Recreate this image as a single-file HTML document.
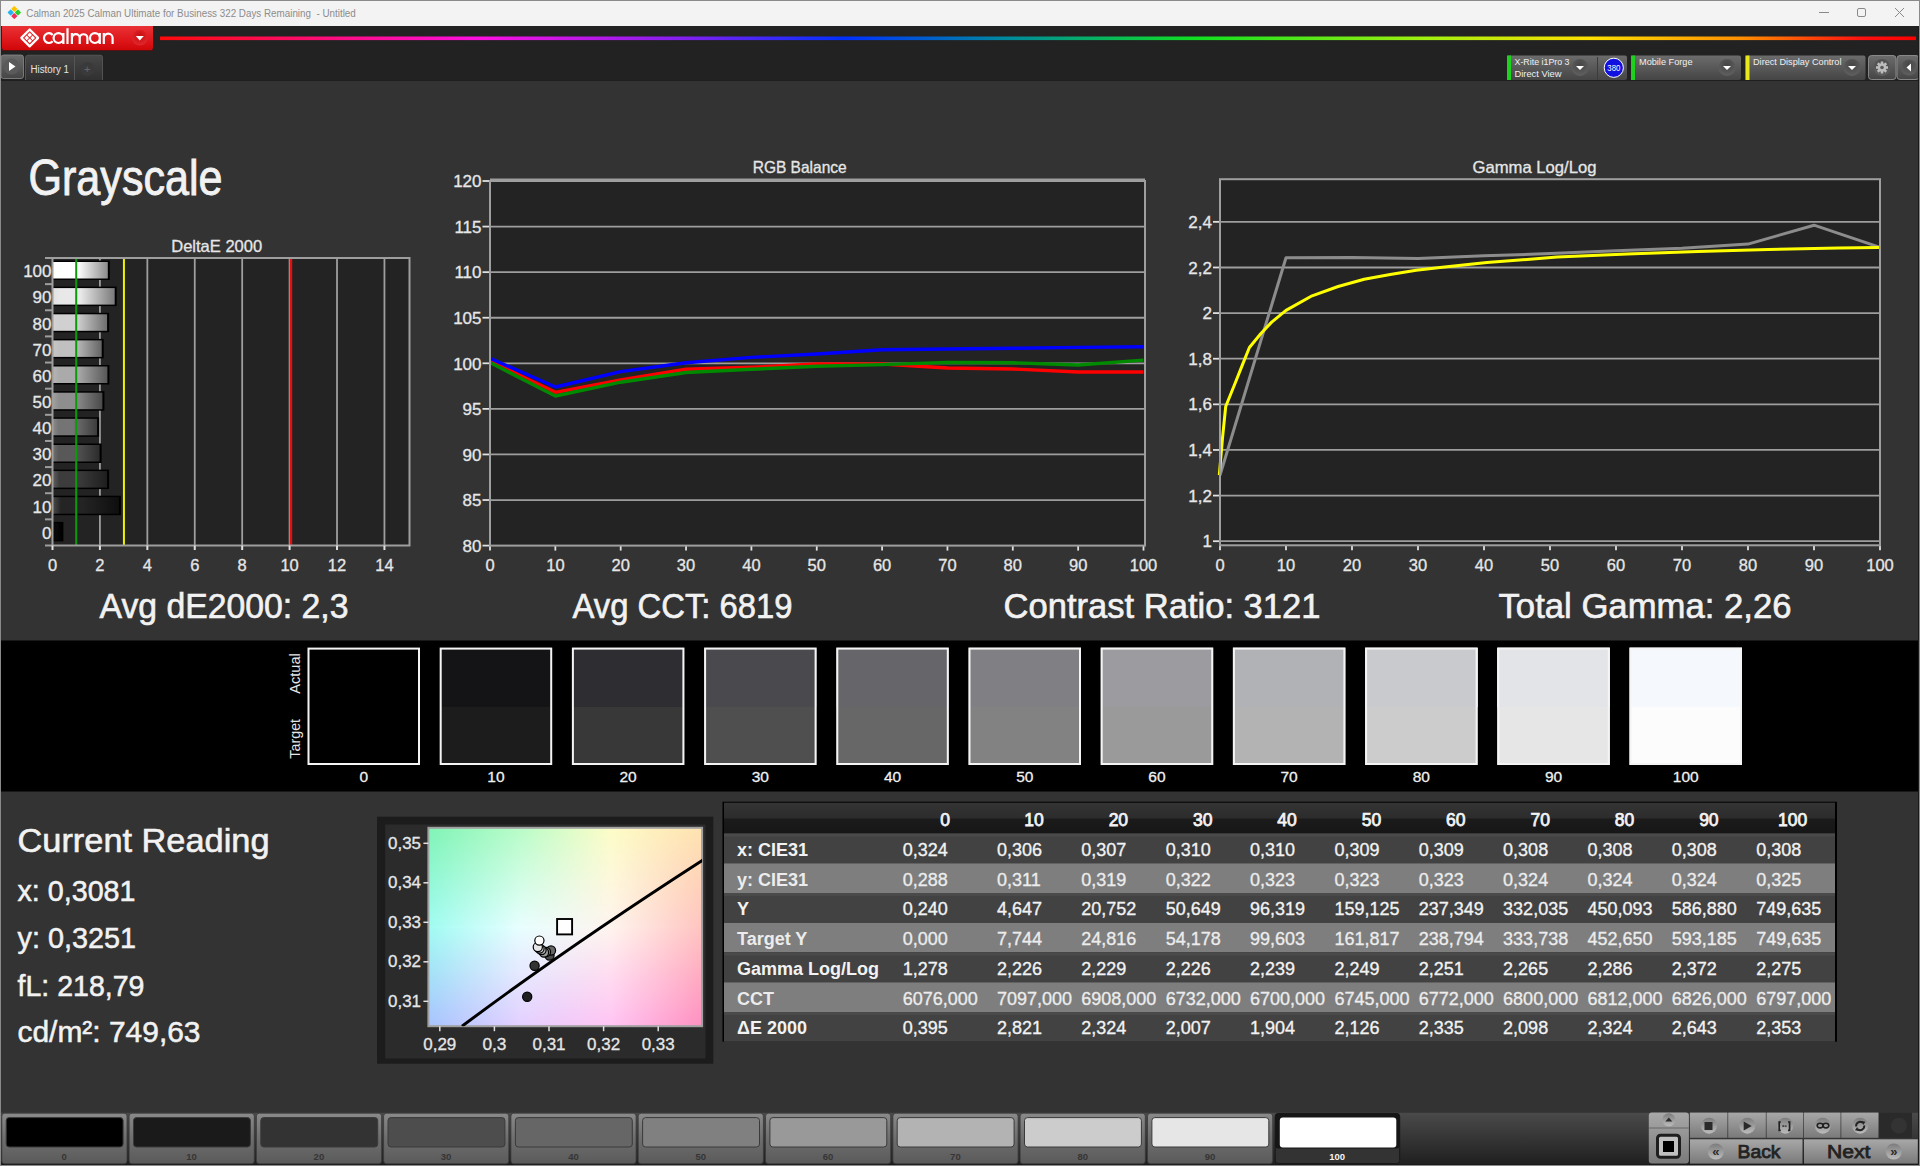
<!DOCTYPE html>
<html><head><meta charset="utf-8"><title>Calman Grayscale</title>
<style>html,body{margin:0;padding:0;background:#333;overflow:hidden}svg{display:block}text{font-family:"Liberation Sans", sans-serif}</style>
</head><body>
<svg width="1920" height="1166" viewBox="0 0 1920 1166" font-family='"Liberation Sans", sans-serif'>
<defs>
<linearGradient id="rainbow" x1="160" y1="0" x2="1916" y2="0" gradientUnits="userSpaceOnUse"><stop offset="0" stop-color="#ff0a0a"/><stop offset="0.18" stop-color="#ff10e0"/><stop offset="0.30" stop-color="#8020f0"/><stop offset="0.39" stop-color="#0030ff"/><stop offset="0.48" stop-color="#0088a0"/><stop offset="0.59" stop-color="#10e020"/><stop offset="0.72" stop-color="#a0f010"/><stop offset="0.815" stop-color="#ffe000"/><stop offset="0.90" stop-color="#ff9000"/><stop offset="0.97" stop-color="#ff1010"/><stop offset="1" stop-color="#ff0000"/></linearGradient>
<linearGradient id="redbtn" x1="0" y1="0" x2="0" y2="1"><stop offset="0" stop-color="#e83236"/><stop offset="0.5" stop-color="#e01a1e"/><stop offset="1" stop-color="#d00608"/></linearGradient>
<linearGradient id="greybtn" x1="0" y1="0" x2="0" y2="1"><stop offset="0" stop-color="#6c6c6c"/><stop offset="1" stop-color="#454545"/></linearGradient>
<linearGradient id="tabg" x1="0" y1="0" x2="0" y2="1"><stop offset="0" stop-color="#474747"/><stop offset="1" stop-color="#303030"/></linearGradient>
<radialGradient id="ddcirc" cx="0.5" cy="0.35" r="0.6"><stop offset="0" stop-color="#454545"/><stop offset="1" stop-color="#5e5e5e"/></radialGradient>
<linearGradient id="hdr" x1="0" y1="0" x2="0" y2="1"><stop offset="0" stop-color="#343434"/><stop offset="0.5" stop-color="#2c2c2c"/><stop offset="0.52" stop-color="#1b1b1b"/><stop offset="1" stop-color="#161616"/></linearGradient>
<linearGradient id="strip" x1="0" y1="0" x2="0" y2="1"><stop offset="0" stop-color="#3a3a3a"/><stop offset="1" stop-color="#262626"/></linearGradient>
<linearGradient id="sbtn" x1="0" y1="0" x2="0" y2="1"><stop offset="0" stop-color="#8a8a8a"/><stop offset="0.5" stop-color="#6e6e6e"/><stop offset="1" stop-color="#5a5a5a"/></linearGradient>
<linearGradient id="ctlbtn" x1="0" y1="0" x2="0" y2="1"><stop offset="0" stop-color="#a8a8a8"/><stop offset="1" stop-color="#7a7a7a"/></linearGradient>
<linearGradient id="ctlcirc" x1="0" y1="0" x2="0" y2="1"><stop offset="0" stop-color="#7c7c7c"/><stop offset="1" stop-color="#bcbcbc"/></linearGradient>
</defs>
<rect x="0" y="0" width="1920" height="1166" fill="#333333" />
<rect x="0" y="0" width="1920" height="26" fill="#f3f3f3" />
<line x1="0" y1="0.5" x2="1920" y2="0.5" stroke="#8a8a8a" stroke-width="1" />
<line x1="0.5" y1="0" x2="0.5" y2="1166" stroke="#8a8a8a" stroke-width="1" />
<g transform="translate(14.3,12.5) rotate(45)"><rect x="-4.8" y="-4.8" width="4.5" height="4.5" rx="0.6" fill="#ffc400"/><rect x="0.3" y="-4.8" width="4.5" height="4.5" rx="0.6" fill="#2ad12a"/><rect x="0.3" y="0.3" width="4.5" height="4.5" rx="0.6" fill="#f0305a"/><rect x="-4.8" y="0.3" width="4.5" height="4.5" rx="0.6" fill="#26b4f0"/></g>
<text x="26.3" y="17.0" font-size="11.5" fill="#8c8c8c" textLength="329.5" lengthAdjust="spacingAndGlyphs" xml:space="preserve">Calman 2025 Calman Ultimate for Business 322 Days Remaining  - Untitled</text>
<line x1="1819" y1="12.5" x2="1829" y2="12.5" stroke="#8a8a8a" stroke-width="1" />
<rect x="1857.5" y="8.5" width="8" height="8" rx="1.5" fill="none" stroke="#8a8a8a" stroke-width="1"/>
<line x1="1895" y1="8" x2="1904" y2="17" stroke="#8a8a8a" stroke-width="1" />
<line x1="1904" y1="8" x2="1895" y2="17" stroke="#8a8a8a" stroke-width="1" />
<rect x="1" y="26" width="1919" height="54" fill="#222222" />
<path d="M2,26 H153 V47 Q153,50.5 149.5,50.5 H5.5 Q2,50.5 2,47 Z" fill="url(#redbtn)"/>
<path d="M2,50.5 H153" stroke="#5a1010" stroke-width="1"/>
<g transform="translate(29.7,37.9) rotate(45)"><rect x="-5.95" y="-5.95" width="11.9" height="11.9" rx="0.3" fill="none" stroke="#ffffff" stroke-width="2.3"/><rect x="-3.75" y="-3.75" width="3.3" height="3.3" fill="#fff"/><rect x="0.45" y="-3.75" width="3.3" height="3.3" fill="#fff"/><rect x="-3.75" y="0.45" width="3.3" height="3.3" fill="#fff"/><rect x="0.45" y="0.45" width="3.3" height="3.3" fill="#fff"/></g>
<path d="M52.65,34.95 A4.9,4.9 0 1 0 52.65,41.25 M63.4,38.1 A4.9,4.9 0 1 0 53.6,38.1 A4.9,4.9 0 1 0 63.4,38.1 M63.4,33.1 V44.0 M67.5,28.2 V44.0 M71.9,32.9 V44.0 M71.9,38.1 A3.9,3.9 0 0 1 79.7,38.1 V44.0 M79.7,38.1 A3.85,3.85 0 0 1 87.4,38.1 V44.0 M99.80000000000001,38.1 A4.9,4.9 0 1 0 90.0,38.1 A4.9,4.9 0 1 0 99.80000000000001,38.1 M99.8,33.1 V44.0 M103.8,32.9 V44.0 M103.8,38.1 A4.4,4.4 0 0 1 112.6,38.1 V44.0" fill="none" stroke="#ffffff" stroke-width="2.2"/>
<defs><radialGradient id="reddd" cx="0.5" cy="0.4" r="0.6"><stop offset="0" stop-color="#c80c10"/><stop offset="1" stop-color="#e0282c"/></radialGradient></defs>
<circle cx="139.8" cy="37.7" r="7.8" fill="url(#reddd)"/>
<path d="M135.8,36 H143.8 L139.8,40.5 Z" fill="#ffffff"/>
<rect x="160" y="36.5" width="1756" height="3.6" fill="url(#rainbow)" />
<rect x="1" y="55" width="22.5" height="23.5" rx="2.5" fill="url(#greybtn)" stroke="#8a8a8a" stroke-width="0.8"/>
<circle cx="11.5" cy="66.5" r="8" fill="#5a5a5a"/>
<path d="M9,62 L15.5,66.5 L9,71 Z" fill="#ffffff"/>
<path d="M25.5,80 V58 Q25.5,55.2 28.5,55.2 H101 Q102.5,55.2 102.5,58 V80" fill="url(#tabg)" stroke="#5c5c5c" stroke-width="0.8"/>
<line x1="74.5" y1="56" x2="74.5" y2="80" stroke="#555" stroke-width="1" />
<text x="30.5" y="72.5" font-size="10" fill="#e4e4e4" textLength="38.5" lengthAdjust="spacingAndGlyphs">History 1</text>
<circle cx="87.3" cy="69" r="7" fill="#3a3a3a"/>
<text x="87.3" y="73.0" font-size="11" fill="#666" text-anchor="middle">+</text>
<rect x="1507" y="55.5" width="120" height="24.5" rx="2" fill="url(#greybtn)"/>
<rect x="1507" y="55.5" width="4" height="24.5" fill="#1fd11f" />
<text x="1514.5" y="65.0" font-size="9.5" fill="#f0f0f0" textLength="55.0" lengthAdjust="spacingAndGlyphs">X-Rite i1Pro 3</text>
<text x="1514.5" y="76.5" font-size="9.5" fill="#f0f0f0" textLength="47.0" lengthAdjust="spacingAndGlyphs">Direct View</text>
<circle cx="1580" cy="67.5" r="8.5" fill="url(#ddcirc)"/>
<path d="M1576,66 H1584 L1580,70 Z" fill="#ffffff"/>
<line x1="1597.5" y1="57" x2="1597.5" y2="80" stroke="#3c3c3c" stroke-width="1" />
<circle cx="1613.8" cy="67.8" r="9.6" fill="#1010e0" stroke="#ffffff" stroke-width="1"/>
<text x="1613.8" y="71.0" font-size="8.5" fill="#ffffff" text-anchor="middle" textLength="13.0" lengthAdjust="spacingAndGlyphs">380</text>
<rect x="1631" y="55.5" width="110" height="24.5" rx="2" fill="url(#greybtn)"/>
<rect x="1631" y="55.5" width="4" height="24.5" fill="#1fd11f" />
<text x="1639.0" y="65.0" font-size="9.5" fill="#f0f0f0" textLength="53.5" lengthAdjust="spacingAndGlyphs">Mobile Forge</text>
<circle cx="1727" cy="67.5" r="8.5" fill="url(#ddcirc)"/>
<path d="M1723,66 H1731 L1727,70 Z" fill="#ffffff"/>
<rect x="1745.5" y="55.5" width="120.0" height="24.5" rx="2" fill="url(#greybtn)"/>
<rect x="1745.5" y="55.5" width="4" height="24.5" fill="#e8e81a" />
<text x="1753.0" y="65.0" font-size="9.5" fill="#f0f0f0" textLength="88.5" lengthAdjust="spacingAndGlyphs">Direct Display Control</text>
<circle cx="1852" cy="67.5" r="8.5" fill="url(#ddcirc)"/>
<path d="M1848,66 H1856 L1852,70 Z" fill="#ffffff"/>
<rect x="1868.5" y="55.5" width="27.5" height="24" rx="3" fill="url(#greybtn)" stroke="#9a9a9a" stroke-width="0.8"/>
<circle cx="1882" cy="67.5" r="8.5" fill="url(#ddcirc)"/>
<g transform="translate(1882,67.5)" fill="#bdbdbd"><circle r="4.2"/><rect x="-1.3" y="-6" width="2.6" height="3" transform="rotate(0)"/><rect x="-1.3" y="-6" width="2.6" height="3" transform="rotate(45)"/><rect x="-1.3" y="-6" width="2.6" height="3" transform="rotate(90)"/><rect x="-1.3" y="-6" width="2.6" height="3" transform="rotate(135)"/><rect x="-1.3" y="-6" width="2.6" height="3" transform="rotate(180)"/><rect x="-1.3" y="-6" width="2.6" height="3" transform="rotate(225)"/><rect x="-1.3" y="-6" width="2.6" height="3" transform="rotate(270)"/><rect x="-1.3" y="-6" width="2.6" height="3" transform="rotate(315)"/><circle r="1.8" fill="#5a5a5a"/></g>
<rect x="1897" y="55.5" width="22" height="24" rx="3" fill="url(#greybtn)" stroke="#9a9a9a" stroke-width="0.8"/>
<circle cx="1909" cy="67.5" r="8" fill="url(#ddcirc)"/>
<path d="M1911,63.5 V71.5 L1906.5,67.5 Z" fill="#ffffff"/>
<rect x="1" y="80" width="1918" height="560" fill="#333333" />
<rect x="1" y="80" width="1918" height="1" fill="#1e1e1e" />
<rect x="1918" y="26" width="1" height="1140" fill="#1a1a1a" />
<rect x="1919" y="0" width="1" height="1166" fill="#8a8a8a" />
<text x="28.5" y="195.3" font-size="50" fill="#f2f2f2" stroke="#f2f2f2" stroke-width="0.90" textLength="194.0" lengthAdjust="spacingAndGlyphs">Grayscale</text>
<rect x="52.5" y="258.0" width="357.0" height="287.5" fill="#232323" />
<line x1="99.92" y1="258.0" x2="99.92" y2="545.5" stroke="#9e9e9e" stroke-width="1.8" />
<line x1="147.34" y1="258.0" x2="147.34" y2="545.5" stroke="#9e9e9e" stroke-width="1.8" />
<line x1="194.76" y1="258.0" x2="194.76" y2="545.5" stroke="#9e9e9e" stroke-width="1.8" />
<line x1="242.18" y1="258.0" x2="242.18" y2="545.5" stroke="#9e9e9e" stroke-width="1.8" />
<line x1="289.6" y1="258.0" x2="289.6" y2="545.5" stroke="#9e9e9e" stroke-width="1.8" />
<line x1="337.02" y1="258.0" x2="337.02" y2="545.5" stroke="#9e9e9e" stroke-width="1.8" />
<line x1="384.44" y1="258.0" x2="384.44" y2="545.5" stroke="#9e9e9e" stroke-width="1.8" />
<defs><linearGradient id="bar0" x1="0" y1="0" x2="1" y2="0"><stop offset="0" stop-color="#ffffff"/><stop offset="0.12" stop-color="#ffffff"/><stop offset="0.45" stop-color="#ffffff"/><stop offset="1" stop-color="#8c8c8c"/></linearGradient><linearGradient id="bar1" x1="0" y1="0" x2="1" y2="0"><stop offset="0" stop-color="#e2e2e2"/><stop offset="0.12" stop-color="#e8e8e8"/><stop offset="0.45" stop-color="#e8e8e8"/><stop offset="1" stop-color="#7a7a7a"/></linearGradient><linearGradient id="bar2" x1="0" y1="0" x2="1" y2="0"><stop offset="0" stop-color="#d4d4d4"/><stop offset="0.12" stop-color="#d0d0d0"/><stop offset="0.45" stop-color="#d0d0d0"/><stop offset="1" stop-color="#6e6e6e"/></linearGradient><linearGradient id="bar3" x1="0" y1="0" x2="1" y2="0"><stop offset="0" stop-color="#c6c6c6"/><stop offset="0.12" stop-color="#c0c0c0"/><stop offset="0.45" stop-color="#c0c0c0"/><stop offset="1" stop-color="#646464"/></linearGradient><linearGradient id="bar4" x1="0" y1="0" x2="1" y2="0"><stop offset="0" stop-color="#b4b4b4"/><stop offset="0.12" stop-color="#aaaaaa"/><stop offset="0.45" stop-color="#aaaaaa"/><stop offset="1" stop-color="#585858"/></linearGradient><linearGradient id="bar5" x1="0" y1="0" x2="1" y2="0"><stop offset="0" stop-color="#a0a0a0"/><stop offset="0.12" stop-color="#8e8e8e"/><stop offset="0.45" stop-color="#8e8e8e"/><stop offset="1" stop-color="#4a4a4a"/></linearGradient><linearGradient id="bar6" x1="0" y1="0" x2="1" y2="0"><stop offset="0" stop-color="#8a8a8a"/><stop offset="0.12" stop-color="#747474"/><stop offset="0.45" stop-color="#747474"/><stop offset="1" stop-color="#3c3c3c"/></linearGradient><linearGradient id="bar7" x1="0" y1="0" x2="1" y2="0"><stop offset="0" stop-color="#707070"/><stop offset="0.12" stop-color="#585858"/><stop offset="0.45" stop-color="#585858"/><stop offset="1" stop-color="#2c2c2c"/></linearGradient><linearGradient id="bar8" x1="0" y1="0" x2="1" y2="0"><stop offset="0" stop-color="#5e5e5e"/><stop offset="0.12" stop-color="#3c3c3c"/><stop offset="0.45" stop-color="#3c3c3c"/><stop offset="1" stop-color="#1e1e1e"/></linearGradient><linearGradient id="bar9" x1="0" y1="0" x2="1" y2="0"><stop offset="0" stop-color="#4a4a4a"/><stop offset="0.12" stop-color="#242424"/><stop offset="0.45" stop-color="#242424"/><stop offset="1" stop-color="#0e0e0e"/></linearGradient><linearGradient id="bar10" x1="0" y1="0" x2="1" y2="0"><stop offset="0" stop-color="#000000"/><stop offset="0.12" stop-color="#080808"/><stop offset="0.45" stop-color="#080808"/><stop offset="1" stop-color="#000000"/></linearGradient></defs>
<rect x="53.0" y="260.5" width="56.8" height="19.5" fill="#000"/>
<rect x="53.0" y="262.0" width="54.8" height="16.5" fill="url(#bar0)"/>
<rect x="53.0" y="286.6" width="63.7" height="19.5" fill="#000"/>
<rect x="53.0" y="288.1" width="61.7" height="16.5" fill="url(#bar1)"/>
<rect x="53.0" y="312.8" width="56.1" height="19.5" fill="#000"/>
<rect x="53.0" y="314.3" width="54.1" height="16.5" fill="url(#bar2)"/>
<rect x="53.0" y="338.9" width="50.7" height="19.5" fill="#000"/>
<rect x="53.0" y="340.4" width="48.7" height="16.5" fill="url(#bar3)"/>
<rect x="53.0" y="365.0" width="56.4" height="19.5" fill="#000"/>
<rect x="53.0" y="366.5" width="54.4" height="16.5" fill="url(#bar4)"/>
<rect x="53.0" y="391.2" width="51.4" height="19.5" fill="#000"/>
<rect x="53.0" y="392.7" width="49.4" height="16.5" fill="url(#bar5)"/>
<rect x="53.0" y="417.3" width="46.1" height="19.5" fill="#000"/>
<rect x="53.0" y="418.8" width="44.1" height="16.5" fill="url(#bar6)"/>
<rect x="53.0" y="443.5" width="48.6" height="19.5" fill="#000"/>
<rect x="53.0" y="445.0" width="46.6" height="16.5" fill="url(#bar7)"/>
<rect x="53.0" y="469.6" width="56.1" height="19.5" fill="#000"/>
<rect x="53.0" y="471.1" width="54.1" height="16.5" fill="url(#bar8)"/>
<rect x="53.0" y="495.7" width="67.9" height="19.5" fill="#000"/>
<rect x="53.0" y="497.2" width="65.9" height="16.5" fill="url(#bar9)"/>
<rect x="53.0" y="521.9" width="10.4" height="19.5" fill="#000"/>
<rect x="53.0" y="523.4" width="8.4" height="16.5" fill="url(#bar10)"/>
<line x1="76.21000000000001" y1="258.0" x2="76.21000000000001" y2="545.5" stroke="#0a9a0a" stroke-width="2" />
<line x1="123.92999999999999" y1="258.0" x2="123.92999999999999" y2="545.5" stroke="#f2f200" stroke-width="2" />
<line x1="291" y1="258.0" x2="291" y2="545.5" stroke="#e01010" stroke-width="2.4" />
<rect x="52.5" y="258.0" width="357.0" height="287.5" fill="none" stroke="#9e9e9e" stroke-width="2"/>
<line x1="45" y1="258.0" x2="52.5" y2="258.0" stroke="#9e9e9e" stroke-width="2" />
<line x1="45" y1="284.1363636363636" x2="52.5" y2="284.1363636363636" stroke="#9e9e9e" stroke-width="2" />
<line x1="45" y1="310.27272727272725" x2="52.5" y2="310.27272727272725" stroke="#9e9e9e" stroke-width="2" />
<line x1="45" y1="336.4090909090909" x2="52.5" y2="336.4090909090909" stroke="#9e9e9e" stroke-width="2" />
<line x1="45" y1="362.54545454545456" x2="52.5" y2="362.54545454545456" stroke="#9e9e9e" stroke-width="2" />
<line x1="45" y1="388.6818181818182" x2="52.5" y2="388.6818181818182" stroke="#9e9e9e" stroke-width="2" />
<line x1="45" y1="414.8181818181818" x2="52.5" y2="414.8181818181818" stroke="#9e9e9e" stroke-width="2" />
<line x1="45" y1="440.9545454545455" x2="52.5" y2="440.9545454545455" stroke="#9e9e9e" stroke-width="2" />
<line x1="45" y1="467.0909090909091" x2="52.5" y2="467.0909090909091" stroke="#9e9e9e" stroke-width="2" />
<line x1="45" y1="493.22727272727275" x2="52.5" y2="493.22727272727275" stroke="#9e9e9e" stroke-width="2" />
<line x1="45" y1="519.3636363636364" x2="52.5" y2="519.3636363636364" stroke="#9e9e9e" stroke-width="2" />
<line x1="45" y1="545.5" x2="52.5" y2="545.5" stroke="#9e9e9e" stroke-width="2" />
<line x1="52.5" y1="545.5" x2="52.5" y2="550.0" stroke="#e0e0e0" stroke-width="2" />
<line x1="99.92" y1="545.5" x2="99.92" y2="550.0" stroke="#e0e0e0" stroke-width="2" />
<line x1="147.34" y1="545.5" x2="147.34" y2="550.0" stroke="#e0e0e0" stroke-width="2" />
<line x1="194.76" y1="545.5" x2="194.76" y2="550.0" stroke="#e0e0e0" stroke-width="2" />
<line x1="242.18" y1="545.5" x2="242.18" y2="550.0" stroke="#e0e0e0" stroke-width="2" />
<line x1="289.6" y1="545.5" x2="289.6" y2="550.0" stroke="#e0e0e0" stroke-width="2" />
<line x1="337.02" y1="545.5" x2="337.02" y2="550.0" stroke="#e0e0e0" stroke-width="2" />
<line x1="384.44" y1="545.5" x2="384.44" y2="550.0" stroke="#e0e0e0" stroke-width="2" />
<text x="51.5" y="277.3" font-size="17" fill="#e6e6e6" stroke="#e6e6e6" stroke-width="0.31" text-anchor="end">100</text>
<text x="51.5" y="303.4" font-size="17" fill="#e6e6e6" stroke="#e6e6e6" stroke-width="0.31" text-anchor="end">90</text>
<text x="51.5" y="329.5" font-size="17" fill="#e6e6e6" stroke="#e6e6e6" stroke-width="0.31" text-anchor="end">80</text>
<text x="51.5" y="355.7" font-size="17" fill="#e6e6e6" stroke="#e6e6e6" stroke-width="0.31" text-anchor="end">70</text>
<text x="51.5" y="381.8" font-size="17" fill="#e6e6e6" stroke="#e6e6e6" stroke-width="0.31" text-anchor="end">60</text>
<text x="51.5" y="407.9" font-size="17" fill="#e6e6e6" stroke="#e6e6e6" stroke-width="0.31" text-anchor="end">50</text>
<text x="51.5" y="434.1" font-size="17" fill="#e6e6e6" stroke="#e6e6e6" stroke-width="0.31" text-anchor="end">40</text>
<text x="51.5" y="460.2" font-size="17" fill="#e6e6e6" stroke="#e6e6e6" stroke-width="0.31" text-anchor="end">30</text>
<text x="51.5" y="486.4" font-size="17" fill="#e6e6e6" stroke="#e6e6e6" stroke-width="0.31" text-anchor="end">20</text>
<text x="51.5" y="512.5" font-size="17" fill="#e6e6e6" stroke="#e6e6e6" stroke-width="0.31" text-anchor="end">10</text>
<text x="51.5" y="538.6" font-size="17" fill="#e6e6e6" stroke="#e6e6e6" stroke-width="0.31" text-anchor="end">0</text>
<text x="52.5" y="570.5" font-size="16.5" fill="#e6e6e6" stroke="#e6e6e6" stroke-width="0.30" text-anchor="middle">0</text>
<text x="99.9" y="570.5" font-size="16.5" fill="#e6e6e6" stroke="#e6e6e6" stroke-width="0.30" text-anchor="middle">2</text>
<text x="147.3" y="570.5" font-size="16.5" fill="#e6e6e6" stroke="#e6e6e6" stroke-width="0.30" text-anchor="middle">4</text>
<text x="194.8" y="570.5" font-size="16.5" fill="#e6e6e6" stroke="#e6e6e6" stroke-width="0.30" text-anchor="middle">6</text>
<text x="242.2" y="570.5" font-size="16.5" fill="#e6e6e6" stroke="#e6e6e6" stroke-width="0.30" text-anchor="middle">8</text>
<text x="289.6" y="570.5" font-size="16.5" fill="#e6e6e6" stroke="#e6e6e6" stroke-width="0.30" text-anchor="middle">10</text>
<text x="337.0" y="570.5" font-size="16.5" fill="#e6e6e6" stroke="#e6e6e6" stroke-width="0.30" text-anchor="middle">12</text>
<text x="384.4" y="570.5" font-size="16.5" fill="#e6e6e6" stroke="#e6e6e6" stroke-width="0.30" text-anchor="middle">14</text>
<text x="216.7" y="252.1" font-size="16.5" fill="#e6e6e6" stroke="#e6e6e6" stroke-width="0.30" text-anchor="middle" textLength="91.0" lengthAdjust="spacingAndGlyphs">DeltaE 2000</text>
<rect x="490.0" y="181.0" width="655.0" height="364.6" fill="#232323" />
<line x1="490.0" y1="226.575" x2="1145.0" y2="226.575" stroke="#9e9e9e" stroke-width="1.8" />
<line x1="490.0" y1="272.15" x2="1145.0" y2="272.15" stroke="#9e9e9e" stroke-width="1.8" />
<line x1="490.0" y1="317.725" x2="1145.0" y2="317.725" stroke="#9e9e9e" stroke-width="1.8" />
<line x1="490.0" y1="363.3" x2="1145.0" y2="363.3" stroke="#9e9e9e" stroke-width="1.8" />
<line x1="490.0" y1="408.875" x2="1145.0" y2="408.875" stroke="#9e9e9e" stroke-width="1.8" />
<line x1="490.0" y1="454.45000000000005" x2="1145.0" y2="454.45000000000005" stroke="#9e9e9e" stroke-width="1.8" />
<line x1="490.0" y1="500.02500000000003" x2="1145.0" y2="500.02500000000003" stroke="#9e9e9e" stroke-width="1.8" />
<line x1="482.5" y1="181.0" x2="490.0" y2="181.0" stroke="#e0e0e0" stroke-width="1.8" />
<text x="481.5" y="187.2" font-size="17" fill="#e6e6e6" stroke="#e6e6e6" stroke-width="0.31" text-anchor="end">120</text>
<line x1="482.5" y1="226.575" x2="490.0" y2="226.575" stroke="#e0e0e0" stroke-width="1.8" />
<text x="481.5" y="232.8" font-size="17" fill="#e6e6e6" stroke="#e6e6e6" stroke-width="0.31" text-anchor="end">115</text>
<line x1="482.5" y1="272.15" x2="490.0" y2="272.15" stroke="#e0e0e0" stroke-width="1.8" />
<text x="481.5" y="278.3" font-size="17" fill="#e6e6e6" stroke="#e6e6e6" stroke-width="0.31" text-anchor="end">110</text>
<line x1="482.5" y1="317.725" x2="490.0" y2="317.725" stroke="#e0e0e0" stroke-width="1.8" />
<text x="481.5" y="323.9" font-size="17" fill="#e6e6e6" stroke="#e6e6e6" stroke-width="0.31" text-anchor="end">105</text>
<line x1="482.5" y1="363.3" x2="490.0" y2="363.3" stroke="#e0e0e0" stroke-width="1.8" />
<text x="481.5" y="369.5" font-size="17" fill="#e6e6e6" stroke="#e6e6e6" stroke-width="0.31" text-anchor="end">100</text>
<line x1="482.5" y1="408.875" x2="490.0" y2="408.875" stroke="#e0e0e0" stroke-width="1.8" />
<text x="481.5" y="415.1" font-size="17" fill="#e6e6e6" stroke="#e6e6e6" stroke-width="0.31" text-anchor="end">95</text>
<line x1="482.5" y1="454.45000000000005" x2="490.0" y2="454.45000000000005" stroke="#e0e0e0" stroke-width="1.8" />
<text x="481.5" y="460.7" font-size="17" fill="#e6e6e6" stroke="#e6e6e6" stroke-width="0.31" text-anchor="end">90</text>
<line x1="482.5" y1="500.02500000000003" x2="490.0" y2="500.02500000000003" stroke="#e0e0e0" stroke-width="1.8" />
<text x="481.5" y="506.2" font-size="17" fill="#e6e6e6" stroke="#e6e6e6" stroke-width="0.31" text-anchor="end">85</text>
<line x1="482.5" y1="545.6" x2="490.0" y2="545.6" stroke="#e0e0e0" stroke-width="1.8" />
<text x="481.5" y="551.8" font-size="17" fill="#e6e6e6" stroke="#e6e6e6" stroke-width="0.31" text-anchor="end">80</text>
<line x1="490.0" y1="545.6" x2="490.0" y2="550.6" stroke="#e0e0e0" stroke-width="1.8" />
<text x="490.0" y="570.5" font-size="16.5" fill="#e6e6e6" stroke="#e6e6e6" stroke-width="0.30" text-anchor="middle">0</text>
<line x1="555.35" y1="545.6" x2="555.35" y2="550.6" stroke="#e0e0e0" stroke-width="1.8" />
<text x="555.4" y="570.5" font-size="16.5" fill="#e6e6e6" stroke="#e6e6e6" stroke-width="0.30" text-anchor="middle">10</text>
<line x1="620.7" y1="545.6" x2="620.7" y2="550.6" stroke="#e0e0e0" stroke-width="1.8" />
<text x="620.7" y="570.5" font-size="16.5" fill="#e6e6e6" stroke="#e6e6e6" stroke-width="0.30" text-anchor="middle">20</text>
<line x1="686.05" y1="545.6" x2="686.05" y2="550.6" stroke="#e0e0e0" stroke-width="1.8" />
<text x="686.0" y="570.5" font-size="16.5" fill="#e6e6e6" stroke="#e6e6e6" stroke-width="0.30" text-anchor="middle">30</text>
<line x1="751.4" y1="545.6" x2="751.4" y2="550.6" stroke="#e0e0e0" stroke-width="1.8" />
<text x="751.4" y="570.5" font-size="16.5" fill="#e6e6e6" stroke="#e6e6e6" stroke-width="0.30" text-anchor="middle">40</text>
<line x1="816.75" y1="545.6" x2="816.75" y2="550.6" stroke="#e0e0e0" stroke-width="1.8" />
<text x="816.8" y="570.5" font-size="16.5" fill="#e6e6e6" stroke="#e6e6e6" stroke-width="0.30" text-anchor="middle">50</text>
<line x1="882.1" y1="545.6" x2="882.1" y2="550.6" stroke="#e0e0e0" stroke-width="1.8" />
<text x="882.1" y="570.5" font-size="16.5" fill="#e6e6e6" stroke="#e6e6e6" stroke-width="0.30" text-anchor="middle">60</text>
<line x1="947.45" y1="545.6" x2="947.45" y2="550.6" stroke="#e0e0e0" stroke-width="1.8" />
<text x="947.5" y="570.5" font-size="16.5" fill="#e6e6e6" stroke="#e6e6e6" stroke-width="0.30" text-anchor="middle">70</text>
<line x1="1012.8" y1="545.6" x2="1012.8" y2="550.6" stroke="#e0e0e0" stroke-width="1.8" />
<text x="1012.8" y="570.5" font-size="16.5" fill="#e6e6e6" stroke="#e6e6e6" stroke-width="0.30" text-anchor="middle">80</text>
<line x1="1078.15" y1="545.6" x2="1078.15" y2="550.6" stroke="#e0e0e0" stroke-width="1.8" />
<text x="1078.2" y="570.5" font-size="16.5" fill="#e6e6e6" stroke="#e6e6e6" stroke-width="0.30" text-anchor="middle">90</text>
<line x1="1143.5" y1="545.6" x2="1143.5" y2="550.6" stroke="#e0e0e0" stroke-width="1.8" />
<text x="1143.5" y="570.5" font-size="16.5" fill="#e6e6e6" stroke="#e6e6e6" stroke-width="0.30" text-anchor="middle">100</text>
<text x="799.7" y="173.1" font-size="16.5" fill="#e6e6e6" stroke="#e6e6e6" stroke-width="0.30" text-anchor="middle" textLength="94.0" lengthAdjust="spacingAndGlyphs">RGB Balance</text>
<polyline points="490.0,361.0 555.4,392.3 620.7,380.0 686.0,369.3 751.4,367.2 816.8,364.0 882.1,364.0 947.5,368.0 1012.8,369.0 1078.2,372.0 1143.5,372.0" fill="none" stroke="#ff0000" stroke-width="3.4" stroke-linejoin="round"/>
<polyline points="490.0,362.5 555.4,396.0 620.7,382.2 686.0,372.5 751.4,369.3 816.8,366.3 882.1,364.6 947.5,362.4 1012.8,362.8 1078.2,365.0 1143.5,360.1" fill="none" stroke="#008a00" stroke-width="3.4" stroke-linejoin="round"/>
<polyline points="490.0,358.3 555.4,387.0 620.7,371.6 686.0,362.8 751.4,357.4 816.8,354.0 882.1,349.7 947.5,349.0 1012.8,348.3 1078.2,347.4 1143.5,346.8" fill="none" stroke="#0000ff" stroke-width="3.4" stroke-linejoin="round"/>
<rect x="490.0" y="181.0" width="655.0" height="364.6" fill="none" stroke="#9e9e9e" stroke-width="2"/>
<line x1="490.0" y1="179.5" x2="1145.0" y2="179.5" stroke="#9e9e9e" stroke-width="2" />
<rect x="1220.0" y="179.2" width="660.0" height="366.09999999999997" fill="#232323" />
<line x1="1220.0" y1="541.2" x2="1880.0" y2="541.2" stroke="#9e9e9e" stroke-width="1.8" />
<line x1="1213" y1="541.2" x2="1220.0" y2="541.2" stroke="#e0e0e0" stroke-width="1.8" />
<text x="1212.0" y="547.2" font-size="17" fill="#e6e6e6" stroke="#e6e6e6" stroke-width="0.31" text-anchor="end">1</text>
<line x1="1220.0" y1="495.58000000000004" x2="1880.0" y2="495.58000000000004" stroke="#9e9e9e" stroke-width="1.8" />
<line x1="1213" y1="495.58000000000004" x2="1220.0" y2="495.58000000000004" stroke="#e0e0e0" stroke-width="1.8" />
<text x="1212.0" y="501.6" font-size="17" fill="#e6e6e6" stroke="#e6e6e6" stroke-width="0.31" text-anchor="end">1,2</text>
<line x1="1220.0" y1="449.96000000000004" x2="1880.0" y2="449.96000000000004" stroke="#9e9e9e" stroke-width="1.8" />
<line x1="1213" y1="449.96000000000004" x2="1220.0" y2="449.96000000000004" stroke="#e0e0e0" stroke-width="1.8" />
<text x="1212.0" y="456.0" font-size="17" fill="#e6e6e6" stroke="#e6e6e6" stroke-width="0.31" text-anchor="end">1,4</text>
<line x1="1220.0" y1="404.34000000000003" x2="1880.0" y2="404.34000000000003" stroke="#9e9e9e" stroke-width="1.8" />
<line x1="1213" y1="404.34000000000003" x2="1220.0" y2="404.34000000000003" stroke="#e0e0e0" stroke-width="1.8" />
<text x="1212.0" y="410.3" font-size="17" fill="#e6e6e6" stroke="#e6e6e6" stroke-width="0.31" text-anchor="end">1,6</text>
<line x1="1220.0" y1="358.72" x2="1880.0" y2="358.72" stroke="#9e9e9e" stroke-width="1.8" />
<line x1="1213" y1="358.72" x2="1220.0" y2="358.72" stroke="#e0e0e0" stroke-width="1.8" />
<text x="1212.0" y="364.7" font-size="17" fill="#e6e6e6" stroke="#e6e6e6" stroke-width="0.31" text-anchor="end">1,8</text>
<line x1="1220.0" y1="313.1" x2="1880.0" y2="313.1" stroke="#9e9e9e" stroke-width="1.8" />
<line x1="1213" y1="313.1" x2="1220.0" y2="313.1" stroke="#e0e0e0" stroke-width="1.8" />
<text x="1212.0" y="319.1" font-size="17" fill="#e6e6e6" stroke="#e6e6e6" stroke-width="0.31" text-anchor="end">2</text>
<line x1="1220.0" y1="267.48" x2="1880.0" y2="267.48" stroke="#9e9e9e" stroke-width="1.8" />
<line x1="1213" y1="267.48" x2="1220.0" y2="267.48" stroke="#e0e0e0" stroke-width="1.8" />
<text x="1212.0" y="273.5" font-size="17" fill="#e6e6e6" stroke="#e6e6e6" stroke-width="0.31" text-anchor="end">2,2</text>
<line x1="1220.0" y1="221.85999999999996" x2="1880.0" y2="221.85999999999996" stroke="#9e9e9e" stroke-width="1.8" />
<line x1="1213" y1="221.85999999999996" x2="1220.0" y2="221.85999999999996" stroke="#e0e0e0" stroke-width="1.8" />
<text x="1212.0" y="227.9" font-size="17" fill="#e6e6e6" stroke="#e6e6e6" stroke-width="0.31" text-anchor="end">2,4</text>
<line x1="1220.0" y1="545.3" x2="1220.0" y2="550.3" stroke="#e0e0e0" stroke-width="1.8" />
<text x="1220.0" y="570.5" font-size="16.5" fill="#e6e6e6" stroke="#e6e6e6" stroke-width="0.30" text-anchor="middle">0</text>
<line x1="1286.0" y1="545.3" x2="1286.0" y2="550.3" stroke="#e0e0e0" stroke-width="1.8" />
<text x="1286.0" y="570.5" font-size="16.5" fill="#e6e6e6" stroke="#e6e6e6" stroke-width="0.30" text-anchor="middle">10</text>
<line x1="1352.0" y1="545.3" x2="1352.0" y2="550.3" stroke="#e0e0e0" stroke-width="1.8" />
<text x="1352.0" y="570.5" font-size="16.5" fill="#e6e6e6" stroke="#e6e6e6" stroke-width="0.30" text-anchor="middle">20</text>
<line x1="1418.0" y1="545.3" x2="1418.0" y2="550.3" stroke="#e0e0e0" stroke-width="1.8" />
<text x="1418.0" y="570.5" font-size="16.5" fill="#e6e6e6" stroke="#e6e6e6" stroke-width="0.30" text-anchor="middle">30</text>
<line x1="1484.0" y1="545.3" x2="1484.0" y2="550.3" stroke="#e0e0e0" stroke-width="1.8" />
<text x="1484.0" y="570.5" font-size="16.5" fill="#e6e6e6" stroke="#e6e6e6" stroke-width="0.30" text-anchor="middle">40</text>
<line x1="1550.0" y1="545.3" x2="1550.0" y2="550.3" stroke="#e0e0e0" stroke-width="1.8" />
<text x="1550.0" y="570.5" font-size="16.5" fill="#e6e6e6" stroke="#e6e6e6" stroke-width="0.30" text-anchor="middle">50</text>
<line x1="1616.0" y1="545.3" x2="1616.0" y2="550.3" stroke="#e0e0e0" stroke-width="1.8" />
<text x="1616.0" y="570.5" font-size="16.5" fill="#e6e6e6" stroke="#e6e6e6" stroke-width="0.30" text-anchor="middle">60</text>
<line x1="1682.0" y1="545.3" x2="1682.0" y2="550.3" stroke="#e0e0e0" stroke-width="1.8" />
<text x="1682.0" y="570.5" font-size="16.5" fill="#e6e6e6" stroke="#e6e6e6" stroke-width="0.30" text-anchor="middle">70</text>
<line x1="1748.0" y1="545.3" x2="1748.0" y2="550.3" stroke="#e0e0e0" stroke-width="1.8" />
<text x="1748.0" y="570.5" font-size="16.5" fill="#e6e6e6" stroke="#e6e6e6" stroke-width="0.30" text-anchor="middle">80</text>
<line x1="1814.0" y1="545.3" x2="1814.0" y2="550.3" stroke="#e0e0e0" stroke-width="1.8" />
<text x="1814.0" y="570.5" font-size="16.5" fill="#e6e6e6" stroke="#e6e6e6" stroke-width="0.30" text-anchor="middle">90</text>
<line x1="1880.0" y1="545.3" x2="1880.0" y2="550.3" stroke="#e0e0e0" stroke-width="1.8" />
<text x="1880.0" y="570.5" font-size="16.5" fill="#e6e6e6" stroke="#e6e6e6" stroke-width="0.30" text-anchor="middle">100</text>
<text x="1534.5" y="173.1" font-size="16.5" fill="#e6e6e6" stroke="#e6e6e6" stroke-width="0.30" text-anchor="middle" textLength="124.0" lengthAdjust="spacingAndGlyphs">Gamma Log/Log</text>
<polyline points="1220.0,475.2 1286.0,257.8 1352.0,257.4 1418.0,258.6 1484.0,255.8 1550.0,253.6 1616.0,250.8 1682.0,248.2 1748.0,244.1 1814.0,225.2 1880.0,247.4" fill="none" stroke="#8c8c8c" stroke-width="3" stroke-linejoin="round"/>
<polyline points="1219.3,475.2 1222.5,438.1 1225.7,406.5 1234.6,384.5 1242.8,363.9 1249.4,347.5 1260.7,333.7 1271.7,322.1 1286.0,310.4 1312.1,295.8 1338.1,286.5 1364.2,279.2 1390.2,274.5 1416.2,270.3 1442.3,267.2 1486.9,262.6 1557.2,257.0 1627.5,254.0 1697.8,251.4 1768.1,249.5 1838.4,248.1 1879.0,247.4" fill="none" stroke="#ffff00" stroke-width="3" stroke-linejoin="round"/>
<rect x="1220.0" y="179.2" width="660.0" height="366.09999999999997" fill="none" stroke="#9e9e9e" stroke-width="2"/>
<text x="99.5" y="618.2" font-size="35" fill="#f2f2f2" stroke="#f2f2f2" stroke-width="0.63" textLength="249.0" lengthAdjust="spacingAndGlyphs">Avg dE2000: 2,3</text>
<text x="572.5" y="618.2" font-size="35" fill="#f2f2f2" stroke="#f2f2f2" stroke-width="0.63" textLength="220.0" lengthAdjust="spacingAndGlyphs">Avg CCT: 6819</text>
<text x="1003.5" y="618.2" font-size="35" fill="#f2f2f2" stroke="#f2f2f2" stroke-width="0.63" textLength="317.0" lengthAdjust="spacingAndGlyphs">Contrast Ratio: 3121</text>
<text x="1498.5" y="618.2" font-size="35" fill="#f2f2f2" stroke="#f2f2f2" stroke-width="0.63" textLength="293.0" lengthAdjust="spacingAndGlyphs">Total Gamma: 2,26</text>
<rect x="1" y="640.5" width="1917" height="151" fill="#000000" />
<text transform="translate(300,673.5) rotate(-90)" x="0" y="0" font-size="14.5" fill="#e6e6e6" text-anchor="middle" textLength="40.5" lengthAdjust="spacingAndGlyphs">Actual</text>
<text transform="translate(300,738.8) rotate(-90)" x="0" y="0" font-size="14.5" fill="#e6e6e6" text-anchor="middle" textLength="39.7" lengthAdjust="spacingAndGlyphs">Target</text>
<rect x="307.5" y="647.6" width="112.5" height="117.4" fill="#000000" />
<rect x="307.5" y="647.6" width="112.5" height="59" fill="#000000" shape-rendering="crispEdges"/>
<rect x="308.5" y="648.6" width="110.5" height="115.4" fill="none" stroke="#f4f4f4" stroke-width="2"/>
<text x="363.8" y="781.9" font-size="15.5" fill="#f0f0f0" stroke="#f0f0f0" stroke-width="0.28" text-anchor="middle">0</text>
<rect x="439.7" y="647.6" width="112.5" height="117.4" fill="#1c1c1c" />
<rect x="439.7" y="647.6" width="112.5" height="59" fill="#141416" shape-rendering="crispEdges"/>
<rect x="440.7" y="648.6" width="110.5" height="115.4" fill="none" stroke="#f4f4f4" stroke-width="2"/>
<text x="495.9" y="781.9" font-size="15.5" fill="#f0f0f0" stroke="#f0f0f0" stroke-width="0.28" text-anchor="middle">10</text>
<rect x="571.9" y="647.6" width="112.5" height="117.4" fill="#383838" />
<rect x="571.9" y="647.6" width="112.5" height="59" fill="#2e2e32" shape-rendering="crispEdges"/>
<rect x="572.9" y="648.6" width="110.5" height="115.4" fill="none" stroke="#f4f4f4" stroke-width="2"/>
<text x="628.1" y="781.9" font-size="15.5" fill="#f0f0f0" stroke="#f0f0f0" stroke-width="0.28" text-anchor="middle">20</text>
<rect x="704.1" y="647.6" width="112.5" height="117.4" fill="#4f4f4f" />
<rect x="704.1" y="647.6" width="112.5" height="59" fill="#4a4a4e" shape-rendering="crispEdges"/>
<rect x="705.1" y="648.6" width="110.5" height="115.4" fill="none" stroke="#f4f4f4" stroke-width="2"/>
<text x="760.3" y="781.9" font-size="15.5" fill="#f0f0f0" stroke="#f0f0f0" stroke-width="0.28" text-anchor="middle">30</text>
<rect x="836.3" y="647.6" width="112.5" height="117.4" fill="#676767" />
<rect x="836.3" y="647.6" width="112.5" height="59" fill="#666569" shape-rendering="crispEdges"/>
<rect x="837.3" y="648.6" width="110.5" height="115.4" fill="none" stroke="#f4f4f4" stroke-width="2"/>
<text x="892.5" y="781.9" font-size="15.5" fill="#f0f0f0" stroke="#f0f0f0" stroke-width="0.28" text-anchor="middle">40</text>
<rect x="968.5" y="647.6" width="112.5" height="117.4" fill="#828282" />
<rect x="968.5" y="647.6" width="112.5" height="59" fill="#807f83" shape-rendering="crispEdges"/>
<rect x="969.5" y="648.6" width="110.5" height="115.4" fill="none" stroke="#f4f4f4" stroke-width="2"/>
<text x="1024.8" y="781.9" font-size="15.5" fill="#f0f0f0" stroke="#f0f0f0" stroke-width="0.28" text-anchor="middle">50</text>
<rect x="1100.7" y="647.6" width="112.5" height="117.4" fill="#9a9a9a" />
<rect x="1100.7" y="647.6" width="112.5" height="59" fill="#9c9ba0" shape-rendering="crispEdges"/>
<rect x="1101.7" y="648.6" width="110.5" height="115.4" fill="none" stroke="#f4f4f4" stroke-width="2"/>
<text x="1156.9" y="781.9" font-size="15.5" fill="#f0f0f0" stroke="#f0f0f0" stroke-width="0.28" text-anchor="middle">60</text>
<rect x="1232.9" y="647.6" width="112.5" height="117.4" fill="#b3b3b3" />
<rect x="1232.9" y="647.6" width="112.5" height="59" fill="#b1b2b6" shape-rendering="crispEdges"/>
<rect x="1233.9" y="648.6" width="110.5" height="115.4" fill="none" stroke="#f4f4f4" stroke-width="2"/>
<text x="1289.1" y="781.9" font-size="15.5" fill="#f0f0f0" stroke="#f0f0f0" stroke-width="0.28" text-anchor="middle">70</text>
<rect x="1365.1" y="647.6" width="112.5" height="117.4" fill="#cccccc" />
<rect x="1365.1" y="647.6" width="112.5" height="59" fill="#c9cacd" shape-rendering="crispEdges"/>
<rect x="1366.1" y="648.6" width="110.5" height="115.4" fill="none" stroke="#f4f4f4" stroke-width="2"/>
<text x="1421.3" y="781.9" font-size="15.5" fill="#f0f0f0" stroke="#f0f0f0" stroke-width="0.28" text-anchor="middle">80</text>
<rect x="1497.3" y="647.6" width="112.5" height="117.4" fill="#e6e6e6" />
<rect x="1497.3" y="647.6" width="112.5" height="59" fill="#e3e4e8" shape-rendering="crispEdges"/>
<rect x="1498.3" y="648.6" width="110.5" height="115.4" fill="none" stroke="#f4f4f4" stroke-width="2"/>
<text x="1553.5" y="781.9" font-size="15.5" fill="#f0f0f0" stroke="#f0f0f0" stroke-width="0.28" text-anchor="middle">90</text>
<rect x="1629.5" y="647.6" width="112.5" height="117.4" fill="#fcfcfc" />
<rect x="1629.5" y="647.6" width="112.5" height="59" fill="#f5f8fd" shape-rendering="crispEdges"/>
<rect x="1630.5" y="648.6" width="110.5" height="115.4" fill="none" stroke="#f4f4f4" stroke-width="2"/>
<text x="1685.8" y="781.9" font-size="15.5" fill="#f0f0f0" stroke="#f0f0f0" stroke-width="0.28" text-anchor="middle">100</text>
<text x="17.5" y="851.9" font-size="33" fill="#f2f2f2" stroke="#f2f2f2" stroke-width="0.59" textLength="252.0" lengthAdjust="spacingAndGlyphs">Current Reading</text>
<text x="17.5" y="900.6" font-size="30" fill="#f2f2f2" stroke="#f2f2f2" stroke-width="0.54" textLength="118.0" lengthAdjust="spacingAndGlyphs">x: 0,3081</text>
<text x="17.5" y="947.5" font-size="30" fill="#f2f2f2" stroke="#f2f2f2" stroke-width="0.54" textLength="118.5" lengthAdjust="spacingAndGlyphs">y: 0,3251</text>
<text x="17.5" y="995.5" font-size="30" fill="#f2f2f2" stroke="#f2f2f2" stroke-width="0.54" textLength="127.0" lengthAdjust="spacingAndGlyphs">fL: 218,79</text>
<text x="17.5" y="1042.0" font-size="30" fill="#f2f2f2" stroke="#f2f2f2" stroke-width="0.54" textLength="183.0" lengthAdjust="spacingAndGlyphs">cd/m²: 749,63</text>
<rect x="377" y="816.7" width="336.3" height="247" fill="#1c1c1c" />
<rect x="385.2" y="824.5" width="320.3" height="234" fill="#2b2b2b" />
<defs><linearGradient id="cr828"><stop offset="0.000" stop-color="#80f4b6"/><stop offset="0.333" stop-color="#b8fcc8"/><stop offset="0.667" stop-color="#fdfcc8"/><stop offset="1.000" stop-color="#ffe1b0"/></linearGradient><linearGradient id="cr830"><stop offset="0.000" stop-color="#81f4b7"/><stop offset="0.333" stop-color="#b9fcc9"/><stop offset="0.667" stop-color="#fdfcc9"/><stop offset="1.000" stop-color="#ffe1b0"/></linearGradient><linearGradient id="cr832"><stop offset="0.000" stop-color="#81f4b9"/><stop offset="0.333" stop-color="#bafcca"/><stop offset="0.667" stop-color="#fdfcc9"/><stop offset="1.000" stop-color="#ffe0b0"/></linearGradient><linearGradient id="cr834"><stop offset="0.000" stop-color="#82f4ba"/><stop offset="0.333" stop-color="#bbfccb"/><stop offset="0.667" stop-color="#fdfcca"/><stop offset="1.000" stop-color="#ffdfb1"/></linearGradient><linearGradient id="cr836"><stop offset="0.000" stop-color="#82f4bb"/><stop offset="0.333" stop-color="#bcfccd"/><stop offset="0.667" stop-color="#fdfccb"/><stop offset="1.000" stop-color="#ffdfb1"/></linearGradient><linearGradient id="cr838"><stop offset="0.000" stop-color="#83f4bc"/><stop offset="0.333" stop-color="#bdfcce"/><stop offset="0.667" stop-color="#fdfbcc"/><stop offset="1.000" stop-color="#ffdeb1"/></linearGradient><linearGradient id="cr840"><stop offset="0.000" stop-color="#84f5bd"/><stop offset="0.333" stop-color="#befccf"/><stop offset="0.667" stop-color="#fdfbcd"/><stop offset="1.000" stop-color="#ffdeb2"/></linearGradient><linearGradient id="cr842"><stop offset="0.000" stop-color="#84f5bf"/><stop offset="0.333" stop-color="#bffcd0"/><stop offset="0.667" stop-color="#fdfbcd"/><stop offset="1.000" stop-color="#ffddb2"/></linearGradient><linearGradient id="cr844"><stop offset="0.000" stop-color="#85f5c0"/><stop offset="0.333" stop-color="#c0fcd1"/><stop offset="0.667" stop-color="#fdfbce"/><stop offset="1.000" stop-color="#ffdcb2"/></linearGradient><linearGradient id="cr846"><stop offset="0.000" stop-color="#86f5c1"/><stop offset="0.333" stop-color="#c1fcd2"/><stop offset="0.667" stop-color="#fdfbcf"/><stop offset="1.000" stop-color="#ffdcb3"/></linearGradient><linearGradient id="cr848"><stop offset="0.000" stop-color="#86f5c2"/><stop offset="0.333" stop-color="#c2fcd3"/><stop offset="0.667" stop-color="#fdfbd0"/><stop offset="1.000" stop-color="#ffdbb3"/></linearGradient><linearGradient id="cr850"><stop offset="0.000" stop-color="#87f5c4"/><stop offset="0.333" stop-color="#c3fcd4"/><stop offset="0.667" stop-color="#fdfad0"/><stop offset="1.000" stop-color="#ffdab3"/></linearGradient><linearGradient id="cr852"><stop offset="0.000" stop-color="#88f6c5"/><stop offset="0.333" stop-color="#c4fcd5"/><stop offset="0.667" stop-color="#fdfad1"/><stop offset="1.000" stop-color="#ffdab4"/></linearGradient><linearGradient id="cr854"><stop offset="0.000" stop-color="#88f6c6"/><stop offset="0.333" stop-color="#c5fcd7"/><stop offset="0.667" stop-color="#fdfad2"/><stop offset="1.000" stop-color="#ffd9b4"/></linearGradient><linearGradient id="cr856"><stop offset="0.000" stop-color="#89f6c7"/><stop offset="0.333" stop-color="#c6fcd8"/><stop offset="0.667" stop-color="#fdfad3"/><stop offset="1.000" stop-color="#ffd9b4"/></linearGradient><linearGradient id="cr858"><stop offset="0.000" stop-color="#8af6c8"/><stop offset="0.333" stop-color="#c7fcd9"/><stop offset="0.667" stop-color="#fdfad3"/><stop offset="1.000" stop-color="#ffd8b5"/></linearGradient><linearGradient id="cr860"><stop offset="0.000" stop-color="#8af6ca"/><stop offset="0.333" stop-color="#c8fdda"/><stop offset="0.667" stop-color="#fdf9d4"/><stop offset="1.000" stop-color="#ffd7b5"/></linearGradient><linearGradient id="cr862"><stop offset="0.000" stop-color="#8bf6cb"/><stop offset="0.333" stop-color="#c9fddb"/><stop offset="0.667" stop-color="#fdf9d5"/><stop offset="1.000" stop-color="#ffd7b5"/></linearGradient><linearGradient id="cr864"><stop offset="0.000" stop-color="#8cf7cc"/><stop offset="0.333" stop-color="#cafddc"/><stop offset="0.667" stop-color="#fdf9d6"/><stop offset="1.000" stop-color="#ffd6b6"/></linearGradient><linearGradient id="cr866"><stop offset="0.000" stop-color="#8cf7cd"/><stop offset="0.333" stop-color="#cafddd"/><stop offset="0.667" stop-color="#fdf9d7"/><stop offset="1.000" stop-color="#ffd6b6"/></linearGradient><linearGradient id="cr868"><stop offset="0.000" stop-color="#8df7ce"/><stop offset="0.333" stop-color="#cbfdde"/><stop offset="0.667" stop-color="#fdf9d7"/><stop offset="1.000" stop-color="#ffd5b6"/></linearGradient><linearGradient id="cr870"><stop offset="0.000" stop-color="#8df7d0"/><stop offset="0.333" stop-color="#ccfddf"/><stop offset="0.667" stop-color="#fdf9d8"/><stop offset="1.000" stop-color="#ffd4b6"/></linearGradient><linearGradient id="cr872"><stop offset="0.000" stop-color="#8ef7d1"/><stop offset="0.333" stop-color="#cdfde1"/><stop offset="0.667" stop-color="#fdf8d9"/><stop offset="1.000" stop-color="#ffd4b7"/></linearGradient><linearGradient id="cr874"><stop offset="0.000" stop-color="#8ff7d2"/><stop offset="0.333" stop-color="#cefde2"/><stop offset="0.667" stop-color="#fdf8da"/><stop offset="1.000" stop-color="#ffd3b7"/></linearGradient><linearGradient id="cr876"><stop offset="0.000" stop-color="#8ff7d3"/><stop offset="0.333" stop-color="#cffde3"/><stop offset="0.667" stop-color="#fdf8da"/><stop offset="1.000" stop-color="#ffd3b7"/></linearGradient><linearGradient id="cr878"><stop offset="0.000" stop-color="#90f8d4"/><stop offset="0.333" stop-color="#d0fde4"/><stop offset="0.667" stop-color="#fef8db"/><stop offset="1.000" stop-color="#ffd2b8"/></linearGradient><linearGradient id="cr880"><stop offset="0.000" stop-color="#91f8d6"/><stop offset="0.333" stop-color="#d1fde5"/><stop offset="0.667" stop-color="#fef8dc"/><stop offset="1.000" stop-color="#ffd1b8"/></linearGradient><linearGradient id="cr882"><stop offset="0.000" stop-color="#91f8d7"/><stop offset="0.333" stop-color="#d2fde6"/><stop offset="0.667" stop-color="#fef7dd"/><stop offset="1.000" stop-color="#ffd1b8"/></linearGradient><linearGradient id="cr884"><stop offset="0.000" stop-color="#92f8d8"/><stop offset="0.333" stop-color="#d3fde7"/><stop offset="0.667" stop-color="#fef7dd"/><stop offset="1.000" stop-color="#ffd0b9"/></linearGradient><linearGradient id="cr886"><stop offset="0.000" stop-color="#93f8d9"/><stop offset="0.333" stop-color="#d4fde8"/><stop offset="0.667" stop-color="#fef7de"/><stop offset="1.000" stop-color="#ffd0b9"/></linearGradient><linearGradient id="cr888"><stop offset="0.000" stop-color="#93f8db"/><stop offset="0.333" stop-color="#d5fde9"/><stop offset="0.667" stop-color="#fef7df"/><stop offset="1.000" stop-color="#ffcfb9"/></linearGradient><linearGradient id="cr890"><stop offset="0.000" stop-color="#94f9dc"/><stop offset="0.333" stop-color="#d6fdeb"/><stop offset="0.667" stop-color="#fef7e0"/><stop offset="1.000" stop-color="#ffceba"/></linearGradient><linearGradient id="cr892"><stop offset="0.000" stop-color="#95f9dd"/><stop offset="0.333" stop-color="#d7fdec"/><stop offset="0.667" stop-color="#fef7e0"/><stop offset="1.000" stop-color="#ffceba"/></linearGradient><linearGradient id="cr894"><stop offset="0.000" stop-color="#95f9de"/><stop offset="0.333" stop-color="#d8feed"/><stop offset="0.667" stop-color="#fef6e1"/><stop offset="1.000" stop-color="#ffcdba"/></linearGradient><linearGradient id="cr896"><stop offset="0.000" stop-color="#96f9df"/><stop offset="0.333" stop-color="#d9feee"/><stop offset="0.667" stop-color="#fef6e2"/><stop offset="1.000" stop-color="#ffcdbb"/></linearGradient><linearGradient id="cr898"><stop offset="0.000" stop-color="#96f9e1"/><stop offset="0.333" stop-color="#dafeef"/><stop offset="0.667" stop-color="#fef6e3"/><stop offset="1.000" stop-color="#ffccbb"/></linearGradient><linearGradient id="cr900"><stop offset="0.000" stop-color="#97f9e2"/><stop offset="0.333" stop-color="#dbfef0"/><stop offset="0.667" stop-color="#fef6e4"/><stop offset="1.000" stop-color="#ffcbbb"/></linearGradient><linearGradient id="cr902"><stop offset="0.000" stop-color="#98fae3"/><stop offset="0.333" stop-color="#dcfef1"/><stop offset="0.667" stop-color="#fef6e4"/><stop offset="1.000" stop-color="#ffcbbc"/></linearGradient><linearGradient id="cr904"><stop offset="0.000" stop-color="#98fae4"/><stop offset="0.333" stop-color="#ddfef2"/><stop offset="0.667" stop-color="#fef5e5"/><stop offset="1.000" stop-color="#ffcabc"/></linearGradient><linearGradient id="cr906"><stop offset="0.000" stop-color="#99fae5"/><stop offset="0.333" stop-color="#defef3"/><stop offset="0.667" stop-color="#fef5e6"/><stop offset="1.000" stop-color="#ffcabc"/></linearGradient><linearGradient id="cr908"><stop offset="0.000" stop-color="#9afae7"/><stop offset="0.333" stop-color="#dffef5"/><stop offset="0.667" stop-color="#fef5e7"/><stop offset="1.000" stop-color="#ffc9bd"/></linearGradient><linearGradient id="cr910"><stop offset="0.000" stop-color="#9afae8"/><stop offset="0.333" stop-color="#e0fef6"/><stop offset="0.667" stop-color="#fef5e7"/><stop offset="1.000" stop-color="#ffc8bd"/></linearGradient><linearGradient id="cr912"><stop offset="0.000" stop-color="#9bfae9"/><stop offset="0.333" stop-color="#e1fef7"/><stop offset="0.667" stop-color="#fef5e8"/><stop offset="1.000" stop-color="#ffc8bd"/></linearGradient><linearGradient id="cr914"><stop offset="0.000" stop-color="#9cfbea"/><stop offset="0.333" stop-color="#e2fef8"/><stop offset="0.667" stop-color="#fef5e9"/><stop offset="1.000" stop-color="#ffc7be"/></linearGradient><linearGradient id="cr916"><stop offset="0.000" stop-color="#9cfbeb"/><stop offset="0.333" stop-color="#e3fef9"/><stop offset="0.667" stop-color="#fef4ea"/><stop offset="1.000" stop-color="#ffc7be"/></linearGradient><linearGradient id="cr918"><stop offset="0.000" stop-color="#9dfbed"/><stop offset="0.333" stop-color="#e4fefa"/><stop offset="0.667" stop-color="#fef4ea"/><stop offset="1.000" stop-color="#ffc6be"/></linearGradient><linearGradient id="cr920"><stop offset="0.000" stop-color="#9efbee"/><stop offset="0.333" stop-color="#e5fefb"/><stop offset="0.667" stop-color="#fef4eb"/><stop offset="1.000" stop-color="#ffc5bf"/></linearGradient><linearGradient id="cr922"><stop offset="0.000" stop-color="#9efbef"/><stop offset="0.333" stop-color="#e6fefc"/><stop offset="0.667" stop-color="#fef4ec"/><stop offset="1.000" stop-color="#ffc5bf"/></linearGradient><linearGradient id="cr924"><stop offset="0.000" stop-color="#9ffbf0"/><stop offset="0.333" stop-color="#e7fefd"/><stop offset="0.667" stop-color="#fef4ed"/><stop offset="1.000" stop-color="#ffc4bf"/></linearGradient><linearGradient id="cr926"><stop offset="0.000" stop-color="#a0fcf2"/><stop offset="0.333" stop-color="#e8ffff"/><stop offset="0.667" stop-color="#fff4ee"/><stop offset="1.000" stop-color="#ffc4c0"/></linearGradient><linearGradient id="cr928"><stop offset="0.000" stop-color="#a0faf2"/><stop offset="0.333" stop-color="#e7feff"/><stop offset="0.667" stop-color="#fff3ee"/><stop offset="1.000" stop-color="#ffc2c0"/></linearGradient><linearGradient id="cr930"><stop offset="0.000" stop-color="#a0f9f2"/><stop offset="0.333" stop-color="#e7fdff"/><stop offset="0.667" stop-color="#fff2ee"/><stop offset="1.000" stop-color="#ffc1c0"/></linearGradient><linearGradient id="cr932"><stop offset="0.000" stop-color="#a0f8f2"/><stop offset="0.333" stop-color="#e7fcff"/><stop offset="0.667" stop-color="#fff1ee"/><stop offset="1.000" stop-color="#ffc0c0"/></linearGradient><linearGradient id="cr934"><stop offset="0.000" stop-color="#a0f7f3"/><stop offset="0.333" stop-color="#e7fbff"/><stop offset="0.667" stop-color="#fff0ee"/><stop offset="1.000" stop-color="#ffbfc0"/></linearGradient><linearGradient id="cr936"><stop offset="0.000" stop-color="#a0f6f3"/><stop offset="0.333" stop-color="#e7faff"/><stop offset="0.667" stop-color="#ffefee"/><stop offset="1.000" stop-color="#ffbec0"/></linearGradient><linearGradient id="cr938"><stop offset="0.000" stop-color="#a0f5f3"/><stop offset="0.333" stop-color="#e7f9ff"/><stop offset="0.667" stop-color="#ffeeee"/><stop offset="1.000" stop-color="#ffbdc0"/></linearGradient><linearGradient id="cr940"><stop offset="0.000" stop-color="#a1f4f3"/><stop offset="0.333" stop-color="#e7f8ff"/><stop offset="0.667" stop-color="#ffedee"/><stop offset="1.000" stop-color="#ffbcc0"/></linearGradient><linearGradient id="cr942"><stop offset="0.000" stop-color="#a1f2f4"/><stop offset="0.333" stop-color="#e7f7ff"/><stop offset="0.667" stop-color="#ffecee"/><stop offset="1.000" stop-color="#ffbbc0"/></linearGradient><linearGradient id="cr944"><stop offset="0.000" stop-color="#a1f1f4"/><stop offset="0.333" stop-color="#e7f6ff"/><stop offset="0.667" stop-color="#ffebef"/><stop offset="1.000" stop-color="#ffbac0"/></linearGradient><linearGradient id="cr946"><stop offset="0.000" stop-color="#a1f0f4"/><stop offset="0.333" stop-color="#e7f5ff"/><stop offset="0.667" stop-color="#ffeaef"/><stop offset="1.000" stop-color="#ffb9c0"/></linearGradient><linearGradient id="cr948"><stop offset="0.000" stop-color="#a1eff4"/><stop offset="0.333" stop-color="#e7f4ff"/><stop offset="0.667" stop-color="#ffe9ef"/><stop offset="1.000" stop-color="#ffb8c0"/></linearGradient><linearGradient id="cr950"><stop offset="0.000" stop-color="#a1eef5"/><stop offset="0.333" stop-color="#e7f3ff"/><stop offset="0.667" stop-color="#ffe8ef"/><stop offset="1.000" stop-color="#ffb7c0"/></linearGradient><linearGradient id="cr952"><stop offset="0.000" stop-color="#a2edf5"/><stop offset="0.333" stop-color="#e6f2ff"/><stop offset="0.667" stop-color="#ffe7ef"/><stop offset="1.000" stop-color="#ffb6c0"/></linearGradient><linearGradient id="cr954"><stop offset="0.000" stop-color="#a2ecf5"/><stop offset="0.333" stop-color="#e6f1ff"/><stop offset="0.667" stop-color="#ffe6ef"/><stop offset="1.000" stop-color="#ffb5c0"/></linearGradient><linearGradient id="cr956"><stop offset="0.000" stop-color="#a2ebf5"/><stop offset="0.333" stop-color="#e6f0ff"/><stop offset="0.667" stop-color="#ffe5ef"/><stop offset="1.000" stop-color="#ffb4c0"/></linearGradient><linearGradient id="cr958"><stop offset="0.000" stop-color="#a2e9f6"/><stop offset="0.333" stop-color="#e6efff"/><stop offset="0.667" stop-color="#ffe4ef"/><stop offset="1.000" stop-color="#ffb3c0"/></linearGradient><linearGradient id="cr960"><stop offset="0.000" stop-color="#a2e8f6"/><stop offset="0.333" stop-color="#e6eeff"/><stop offset="0.667" stop-color="#ffe3f0"/><stop offset="1.000" stop-color="#ffb2c0"/></linearGradient><linearGradient id="cr962"><stop offset="0.000" stop-color="#a2e7f6"/><stop offset="0.333" stop-color="#e6edff"/><stop offset="0.667" stop-color="#ffe2f0"/><stop offset="1.000" stop-color="#ffb1c0"/></linearGradient><linearGradient id="cr964"><stop offset="0.000" stop-color="#a3e6f6"/><stop offset="0.333" stop-color="#e6ecff"/><stop offset="0.667" stop-color="#ffe1f0"/><stop offset="1.000" stop-color="#ffb0c0"/></linearGradient><linearGradient id="cr966"><stop offset="0.000" stop-color="#a3e5f7"/><stop offset="0.333" stop-color="#e6ecff"/><stop offset="0.667" stop-color="#ffe0f0"/><stop offset="1.000" stop-color="#ffafc0"/></linearGradient><linearGradient id="cr968"><stop offset="0.000" stop-color="#a3e4f7"/><stop offset="0.333" stop-color="#e6ebff"/><stop offset="0.667" stop-color="#ffdff0"/><stop offset="1.000" stop-color="#ffadc0"/></linearGradient><linearGradient id="cr970"><stop offset="0.000" stop-color="#a3e3f7"/><stop offset="0.333" stop-color="#e6eaff"/><stop offset="0.667" stop-color="#ffdef0"/><stop offset="1.000" stop-color="#ffacc0"/></linearGradient><linearGradient id="cr972"><stop offset="0.000" stop-color="#a3e2f8"/><stop offset="0.333" stop-color="#e6e9ff"/><stop offset="0.667" stop-color="#ffddf0"/><stop offset="1.000" stop-color="#ffabc0"/></linearGradient><linearGradient id="cr974"><stop offset="0.000" stop-color="#a3e0f8"/><stop offset="0.333" stop-color="#e6e8ff"/><stop offset="0.667" stop-color="#ffdcf0"/><stop offset="1.000" stop-color="#ffaac0"/></linearGradient><linearGradient id="cr976"><stop offset="0.000" stop-color="#a4dff8"/><stop offset="0.333" stop-color="#e5e7ff"/><stop offset="0.667" stop-color="#ffdbf1"/><stop offset="1.000" stop-color="#ffa9c0"/></linearGradient><linearGradient id="cr978"><stop offset="0.000" stop-color="#a4def8"/><stop offset="0.333" stop-color="#e5e6ff"/><stop offset="0.667" stop-color="#ffdaf1"/><stop offset="1.000" stop-color="#ffa8c0"/></linearGradient><linearGradient id="cr980"><stop offset="0.000" stop-color="#a4ddf9"/><stop offset="0.333" stop-color="#e5e5ff"/><stop offset="0.667" stop-color="#ffd9f1"/><stop offset="1.000" stop-color="#ffa7c0"/></linearGradient><linearGradient id="cr982"><stop offset="0.000" stop-color="#a4dcf9"/><stop offset="0.333" stop-color="#e5e4ff"/><stop offset="0.667" stop-color="#ffd8f1"/><stop offset="1.000" stop-color="#ffa6c0"/></linearGradient><linearGradient id="cr984"><stop offset="0.000" stop-color="#a4dbf9"/><stop offset="0.333" stop-color="#e5e3ff"/><stop offset="0.667" stop-color="#ffd7f1"/><stop offset="1.000" stop-color="#ffa5c0"/></linearGradient><linearGradient id="cr986"><stop offset="0.000" stop-color="#a4daf9"/><stop offset="0.333" stop-color="#e5e2ff"/><stop offset="0.667" stop-color="#ffd6f1"/><stop offset="1.000" stop-color="#ffa4c0"/></linearGradient><linearGradient id="cr988"><stop offset="0.000" stop-color="#a5d9fa"/><stop offset="0.333" stop-color="#e5e1ff"/><stop offset="0.667" stop-color="#ffd6f1"/><stop offset="1.000" stop-color="#ffa3c0"/></linearGradient><linearGradient id="cr990"><stop offset="0.000" stop-color="#a5d7fa"/><stop offset="0.333" stop-color="#e5e0ff"/><stop offset="0.667" stop-color="#ffd5f1"/><stop offset="1.000" stop-color="#ffa2c0"/></linearGradient><linearGradient id="cr992"><stop offset="0.000" stop-color="#a5d6fa"/><stop offset="0.333" stop-color="#e5dfff"/><stop offset="0.667" stop-color="#ffd4f1"/><stop offset="1.000" stop-color="#ffa1c0"/></linearGradient><linearGradient id="cr994"><stop offset="0.000" stop-color="#a5d5fa"/><stop offset="0.333" stop-color="#e5deff"/><stop offset="0.667" stop-color="#ffd3f2"/><stop offset="1.000" stop-color="#ffa0c0"/></linearGradient><linearGradient id="cr996"><stop offset="0.000" stop-color="#a5d4fb"/><stop offset="0.333" stop-color="#e5ddff"/><stop offset="0.667" stop-color="#ffd2f2"/><stop offset="1.000" stop-color="#ff9fc0"/></linearGradient><linearGradient id="cr998"><stop offset="0.000" stop-color="#a5d3fb"/><stop offset="0.333" stop-color="#e5dcff"/><stop offset="0.667" stop-color="#ffd1f2"/><stop offset="1.000" stop-color="#ff9ec0"/></linearGradient><linearGradient id="cr1000"><stop offset="0.000" stop-color="#a5d2fb"/><stop offset="0.333" stop-color="#e5dbff"/><stop offset="0.667" stop-color="#ffd0f2"/><stop offset="1.000" stop-color="#ff9dc0"/></linearGradient><linearGradient id="cr1002"><stop offset="0.000" stop-color="#a6d1fb"/><stop offset="0.333" stop-color="#e4daff"/><stop offset="0.667" stop-color="#ffcff2"/><stop offset="1.000" stop-color="#ff9cc0"/></linearGradient><linearGradient id="cr1004"><stop offset="0.000" stop-color="#a6cffc"/><stop offset="0.333" stop-color="#e4daff"/><stop offset="0.667" stop-color="#ffcef2"/><stop offset="1.000" stop-color="#ff9bc0"/></linearGradient><linearGradient id="cr1006"><stop offset="0.000" stop-color="#a6cefc"/><stop offset="0.333" stop-color="#e4d9ff"/><stop offset="0.667" stop-color="#ffcdf2"/><stop offset="1.000" stop-color="#ff9ac0"/></linearGradient><linearGradient id="cr1008"><stop offset="0.000" stop-color="#a6cdfc"/><stop offset="0.333" stop-color="#e4d8ff"/><stop offset="0.667" stop-color="#ffccf2"/><stop offset="1.000" stop-color="#ff99c0"/></linearGradient><linearGradient id="cr1010"><stop offset="0.000" stop-color="#a6ccfd"/><stop offset="0.333" stop-color="#e4d7ff"/><stop offset="0.667" stop-color="#ffcbf3"/><stop offset="1.000" stop-color="#ff97c0"/></linearGradient><linearGradient id="cr1012"><stop offset="0.000" stop-color="#a6cbfd"/><stop offset="0.333" stop-color="#e4d6ff"/><stop offset="0.667" stop-color="#ffcaf3"/><stop offset="1.000" stop-color="#ff96c0"/></linearGradient><linearGradient id="cr1014"><stop offset="0.000" stop-color="#a7cafd"/><stop offset="0.333" stop-color="#e4d5ff"/><stop offset="0.667" stop-color="#ffc9f3"/><stop offset="1.000" stop-color="#ff95c0"/></linearGradient><linearGradient id="cr1016"><stop offset="0.000" stop-color="#a7c9fd"/><stop offset="0.333" stop-color="#e4d4ff"/><stop offset="0.667" stop-color="#ffc8f3"/><stop offset="1.000" stop-color="#ff94c0"/></linearGradient><linearGradient id="cr1018"><stop offset="0.000" stop-color="#a7c8fe"/><stop offset="0.333" stop-color="#e4d3ff"/><stop offset="0.667" stop-color="#ffc7f3"/><stop offset="1.000" stop-color="#ff93c0"/></linearGradient><linearGradient id="cr1020"><stop offset="0.000" stop-color="#a7c6fe"/><stop offset="0.333" stop-color="#e4d2ff"/><stop offset="0.667" stop-color="#ffc6f3"/><stop offset="1.000" stop-color="#ff92c0"/></linearGradient><linearGradient id="cr1022"><stop offset="0.000" stop-color="#a7c5fe"/><stop offset="0.333" stop-color="#e4d1ff"/><stop offset="0.667" stop-color="#ffc5f3"/><stop offset="1.000" stop-color="#ff91c0"/></linearGradient><linearGradient id="cr1024"><stop offset="0.000" stop-color="#a7c4fe"/><stop offset="0.333" stop-color="#e4d0ff"/><stop offset="0.667" stop-color="#ffc4f3"/><stop offset="1.000" stop-color="#ff90c0"/></linearGradient></defs>
<g shape-rendering="crispEdges"><rect x="428" y="828" width="275" height="2" fill="url(#cr828)"/><rect x="428" y="830" width="275" height="2" fill="url(#cr830)"/><rect x="428" y="832" width="275" height="2" fill="url(#cr832)"/><rect x="428" y="834" width="275" height="2" fill="url(#cr834)"/><rect x="428" y="836" width="275" height="2" fill="url(#cr836)"/><rect x="428" y="838" width="275" height="2" fill="url(#cr838)"/><rect x="428" y="840" width="275" height="2" fill="url(#cr840)"/><rect x="428" y="842" width="275" height="2" fill="url(#cr842)"/><rect x="428" y="844" width="275" height="2" fill="url(#cr844)"/><rect x="428" y="846" width="275" height="2" fill="url(#cr846)"/><rect x="428" y="848" width="275" height="2" fill="url(#cr848)"/><rect x="428" y="850" width="275" height="2" fill="url(#cr850)"/><rect x="428" y="852" width="275" height="2" fill="url(#cr852)"/><rect x="428" y="854" width="275" height="2" fill="url(#cr854)"/><rect x="428" y="856" width="275" height="2" fill="url(#cr856)"/><rect x="428" y="858" width="275" height="2" fill="url(#cr858)"/><rect x="428" y="860" width="275" height="2" fill="url(#cr860)"/><rect x="428" y="862" width="275" height="2" fill="url(#cr862)"/><rect x="428" y="864" width="275" height="2" fill="url(#cr864)"/><rect x="428" y="866" width="275" height="2" fill="url(#cr866)"/><rect x="428" y="868" width="275" height="2" fill="url(#cr868)"/><rect x="428" y="870" width="275" height="2" fill="url(#cr870)"/><rect x="428" y="872" width="275" height="2" fill="url(#cr872)"/><rect x="428" y="874" width="275" height="2" fill="url(#cr874)"/><rect x="428" y="876" width="275" height="2" fill="url(#cr876)"/><rect x="428" y="878" width="275" height="2" fill="url(#cr878)"/><rect x="428" y="880" width="275" height="2" fill="url(#cr880)"/><rect x="428" y="882" width="275" height="2" fill="url(#cr882)"/><rect x="428" y="884" width="275" height="2" fill="url(#cr884)"/><rect x="428" y="886" width="275" height="2" fill="url(#cr886)"/><rect x="428" y="888" width="275" height="2" fill="url(#cr888)"/><rect x="428" y="890" width="275" height="2" fill="url(#cr890)"/><rect x="428" y="892" width="275" height="2" fill="url(#cr892)"/><rect x="428" y="894" width="275" height="2" fill="url(#cr894)"/><rect x="428" y="896" width="275" height="2" fill="url(#cr896)"/><rect x="428" y="898" width="275" height="2" fill="url(#cr898)"/><rect x="428" y="900" width="275" height="2" fill="url(#cr900)"/><rect x="428" y="902" width="275" height="2" fill="url(#cr902)"/><rect x="428" y="904" width="275" height="2" fill="url(#cr904)"/><rect x="428" y="906" width="275" height="2" fill="url(#cr906)"/><rect x="428" y="908" width="275" height="2" fill="url(#cr908)"/><rect x="428" y="910" width="275" height="2" fill="url(#cr910)"/><rect x="428" y="912" width="275" height="2" fill="url(#cr912)"/><rect x="428" y="914" width="275" height="2" fill="url(#cr914)"/><rect x="428" y="916" width="275" height="2" fill="url(#cr916)"/><rect x="428" y="918" width="275" height="2" fill="url(#cr918)"/><rect x="428" y="920" width="275" height="2" fill="url(#cr920)"/><rect x="428" y="922" width="275" height="2" fill="url(#cr922)"/><rect x="428" y="924" width="275" height="2" fill="url(#cr924)"/><rect x="428" y="926" width="275" height="2" fill="url(#cr926)"/><rect x="428" y="928" width="275" height="2" fill="url(#cr928)"/><rect x="428" y="930" width="275" height="2" fill="url(#cr930)"/><rect x="428" y="932" width="275" height="2" fill="url(#cr932)"/><rect x="428" y="934" width="275" height="2" fill="url(#cr934)"/><rect x="428" y="936" width="275" height="2" fill="url(#cr936)"/><rect x="428" y="938" width="275" height="2" fill="url(#cr938)"/><rect x="428" y="940" width="275" height="2" fill="url(#cr940)"/><rect x="428" y="942" width="275" height="2" fill="url(#cr942)"/><rect x="428" y="944" width="275" height="2" fill="url(#cr944)"/><rect x="428" y="946" width="275" height="2" fill="url(#cr946)"/><rect x="428" y="948" width="275" height="2" fill="url(#cr948)"/><rect x="428" y="950" width="275" height="2" fill="url(#cr950)"/><rect x="428" y="952" width="275" height="2" fill="url(#cr952)"/><rect x="428" y="954" width="275" height="2" fill="url(#cr954)"/><rect x="428" y="956" width="275" height="2" fill="url(#cr956)"/><rect x="428" y="958" width="275" height="2" fill="url(#cr958)"/><rect x="428" y="960" width="275" height="2" fill="url(#cr960)"/><rect x="428" y="962" width="275" height="2" fill="url(#cr962)"/><rect x="428" y="964" width="275" height="2" fill="url(#cr964)"/><rect x="428" y="966" width="275" height="2" fill="url(#cr966)"/><rect x="428" y="968" width="275" height="2" fill="url(#cr968)"/><rect x="428" y="970" width="275" height="2" fill="url(#cr970)"/><rect x="428" y="972" width="275" height="2" fill="url(#cr972)"/><rect x="428" y="974" width="275" height="2" fill="url(#cr974)"/><rect x="428" y="976" width="275" height="2" fill="url(#cr976)"/><rect x="428" y="978" width="275" height="2" fill="url(#cr978)"/><rect x="428" y="980" width="275" height="2" fill="url(#cr980)"/><rect x="428" y="982" width="275" height="2" fill="url(#cr982)"/><rect x="428" y="984" width="275" height="2" fill="url(#cr984)"/><rect x="428" y="986" width="275" height="2" fill="url(#cr986)"/><rect x="428" y="988" width="275" height="2" fill="url(#cr988)"/><rect x="428" y="990" width="275" height="2" fill="url(#cr990)"/><rect x="428" y="992" width="275" height="2" fill="url(#cr992)"/><rect x="428" y="994" width="275" height="2" fill="url(#cr994)"/><rect x="428" y="996" width="275" height="2" fill="url(#cr996)"/><rect x="428" y="998" width="275" height="2" fill="url(#cr998)"/><rect x="428" y="1000" width="275" height="2" fill="url(#cr1000)"/><rect x="428" y="1002" width="275" height="2" fill="url(#cr1002)"/><rect x="428" y="1004" width="275" height="2" fill="url(#cr1004)"/><rect x="428" y="1006" width="275" height="2" fill="url(#cr1006)"/><rect x="428" y="1008" width="275" height="2" fill="url(#cr1008)"/><rect x="428" y="1010" width="275" height="2" fill="url(#cr1010)"/><rect x="428" y="1012" width="275" height="2" fill="url(#cr1012)"/><rect x="428" y="1014" width="275" height="2" fill="url(#cr1014)"/><rect x="428" y="1016" width="275" height="2" fill="url(#cr1016)"/><rect x="428" y="1018" width="275" height="2" fill="url(#cr1018)"/><rect x="428" y="1020" width="275" height="2" fill="url(#cr1020)"/><rect x="428" y="1022" width="275" height="2" fill="url(#cr1022)"/><rect x="428" y="1024" width="275" height="2" fill="url(#cr1024)"/></g>
<rect x="428.4" y="827.8" width="273.70000000000005" height="198.4000000000001" fill="none" stroke="#a0a0a0" stroke-width="2"/>
<line x1="423.4" y1="843.3000000000001" x2="428.4" y2="843.3000000000001" stroke="#e0e0e0" stroke-width="1.5" />
<text x="421.0" y="848.8" font-size="16" fill="#e6e6e6" stroke="#e6e6e6" stroke-width="0.29" text-anchor="end" textLength="33.0" lengthAdjust="spacingAndGlyphs">0,35</text>
<line x1="423.4" y1="882.8000000000001" x2="428.4" y2="882.8000000000001" stroke="#e0e0e0" stroke-width="1.5" />
<text x="421.0" y="888.3" font-size="16" fill="#e6e6e6" stroke="#e6e6e6" stroke-width="0.29" text-anchor="end" textLength="33.0" lengthAdjust="spacingAndGlyphs">0,34</text>
<line x1="423.4" y1="922.3000000000001" x2="428.4" y2="922.3000000000001" stroke="#e0e0e0" stroke-width="1.5" />
<text x="421.0" y="927.8" font-size="16" fill="#e6e6e6" stroke="#e6e6e6" stroke-width="0.29" text-anchor="end" textLength="33.0" lengthAdjust="spacingAndGlyphs">0,33</text>
<line x1="423.4" y1="961.8000000000002" x2="428.4" y2="961.8000000000002" stroke="#e0e0e0" stroke-width="1.5" />
<text x="421.0" y="967.3" font-size="16" fill="#e6e6e6" stroke="#e6e6e6" stroke-width="0.29" text-anchor="end" textLength="33.0" lengthAdjust="spacingAndGlyphs">0,32</text>
<line x1="423.4" y1="1001.3" x2="428.4" y2="1001.3" stroke="#e0e0e0" stroke-width="1.5" />
<text x="421.0" y="1006.8" font-size="16" fill="#e6e6e6" stroke="#e6e6e6" stroke-width="0.29" text-anchor="end" textLength="33.0" lengthAdjust="spacingAndGlyphs">0,31</text>
<line x1="439.8" y1="1026.2" x2="439.8" y2="1031.2" stroke="#e0e0e0" stroke-width="1.5" />
<text x="439.8" y="1050.0" font-size="16" fill="#e6e6e6" stroke="#e6e6e6" stroke-width="0.29" text-anchor="middle" textLength="33.0" lengthAdjust="spacingAndGlyphs">0,29</text>
<line x1="494.4000000000001" y1="1026.2" x2="494.4000000000001" y2="1031.2" stroke="#e0e0e0" stroke-width="1.5" />
<text x="494.4" y="1050.0" font-size="16" fill="#e6e6e6" stroke="#e6e6e6" stroke-width="0.29" text-anchor="middle" textLength="24.0" lengthAdjust="spacingAndGlyphs">0,3</text>
<line x1="549.0000000000001" y1="1026.2" x2="549.0000000000001" y2="1031.2" stroke="#e0e0e0" stroke-width="1.5" />
<text x="549.0" y="1050.0" font-size="16" fill="#e6e6e6" stroke="#e6e6e6" stroke-width="0.29" text-anchor="middle" textLength="33.0" lengthAdjust="spacingAndGlyphs">0,31</text>
<line x1="603.5999999999999" y1="1026.2" x2="603.5999999999999" y2="1031.2" stroke="#e0e0e0" stroke-width="1.5" />
<text x="603.6" y="1050.0" font-size="16" fill="#e6e6e6" stroke="#e6e6e6" stroke-width="0.29" text-anchor="middle" textLength="33.0" lengthAdjust="spacingAndGlyphs">0,32</text>
<line x1="658.1999999999999" y1="1026.2" x2="658.1999999999999" y2="1031.2" stroke="#e0e0e0" stroke-width="1.5" />
<text x="658.2" y="1050.0" font-size="16" fill="#e6e6e6" stroke="#e6e6e6" stroke-width="0.29" text-anchor="middle" textLength="33.0" lengthAdjust="spacingAndGlyphs">0,33</text>
<defs><clipPath id="cieclip"><rect x="428.4" y="827.8" width="273.7" height="198.4"/></clipPath></defs>
<path d="M462,1026.2 Q569,946.3 703,860" fill="none" stroke="#000" stroke-width="3" clip-path="url(#cieclip)"/>
<circle cx="527.2" cy="996.8" r="4.6" fill="#202020" stroke="#000" stroke-width="1.2"/>
<circle cx="534.6" cy="965.8" r="4.6" fill="#333333" stroke="#000" stroke-width="1.2"/>
<circle cx="549.5" cy="955.5" r="4.6" fill="#4a4a4a" stroke="#000" stroke-width="1.2"/>
<circle cx="551" cy="950.5" r="4.6" fill="#666666" stroke="#000" stroke-width="1.2"/>
<circle cx="546" cy="952" r="4.6" fill="#808080" stroke="#000" stroke-width="1.2"/>
<circle cx="544" cy="952.5" r="4.6" fill="#9a9a9a" stroke="#000" stroke-width="1.2"/>
<circle cx="541.5" cy="950" r="4.6" fill="#b3b3b3" stroke="#000" stroke-width="1.2"/>
<circle cx="539.5" cy="948.5" r="4.6" fill="#cccccc" stroke="#000" stroke-width="1.2"/>
<circle cx="537.8" cy="947.1" r="4.6" fill="#e6e6e6" stroke="#000" stroke-width="1.2"/>
<circle cx="539.4" cy="940.6" r="4.6" fill="#ffffff" stroke="#000" stroke-width="1.2"/>
<rect x="557.1" y="919" width="15" height="15.4" fill="#fff" stroke="#000" stroke-width="1.9"/>
<rect x="722.5" y="801.7" width="1114.5" height="240" fill="#000000" />
<rect x="724.0" y="802.7" width="1111.0" height="31" fill="url(#hdr)" />
<text x="950.0" y="825.6" font-size="17.5" fill="#f4f4f4" stroke="#f4f4f4" stroke-width="0.75" text-anchor="end">0</text>
<text x="1043.8" y="825.6" font-size="17.5" fill="#f4f4f4" stroke="#f4f4f4" stroke-width="0.75" text-anchor="end">10</text>
<text x="1128.1" y="825.6" font-size="17.5" fill="#f4f4f4" stroke="#f4f4f4" stroke-width="0.75" text-anchor="end">20</text>
<text x="1212.5" y="825.6" font-size="17.5" fill="#f4f4f4" stroke="#f4f4f4" stroke-width="0.75" text-anchor="end">30</text>
<text x="1296.8" y="825.6" font-size="17.5" fill="#f4f4f4" stroke="#f4f4f4" stroke-width="0.75" text-anchor="end">40</text>
<text x="1381.2" y="825.6" font-size="17.5" fill="#f4f4f4" stroke="#f4f4f4" stroke-width="0.75" text-anchor="end">50</text>
<text x="1465.5" y="825.6" font-size="17.5" fill="#f4f4f4" stroke="#f4f4f4" stroke-width="0.75" text-anchor="end">60</text>
<text x="1549.9" y="825.6" font-size="17.5" fill="#f4f4f4" stroke="#f4f4f4" stroke-width="0.75" text-anchor="end">70</text>
<text x="1634.2" y="825.6" font-size="17.5" fill="#f4f4f4" stroke="#f4f4f4" stroke-width="0.75" text-anchor="end">80</text>
<text x="1718.6" y="825.6" font-size="17.5" fill="#f4f4f4" stroke="#f4f4f4" stroke-width="0.75" text-anchor="end">90</text>
<text x="1807.3" y="825.6" font-size="17.5" fill="#f4f4f4" stroke="#f4f4f4" stroke-width="0.75" text-anchor="end">100</text>
<rect x="724.0" y="833.50" width="1111.0" height="29.75" fill="#424242" />
<rect x="724.0" y="833.50" width="1111.0" height="3" fill="#4a4a4a" />
<text x="737.0" y="855.8" font-size="18" fill="#f2f2f2" font-weight="bold">x: CIE31</text>
<text x="902.7" y="855.8" font-size="18" fill="#f2f2f2" stroke="#f2f2f2" stroke-width="0.32">0,324</text>
<text x="997.0" y="855.8" font-size="18" fill="#f2f2f2" stroke="#f2f2f2" stroke-width="0.32">0,306</text>
<text x="1081.3" y="855.8" font-size="18" fill="#f2f2f2" stroke="#f2f2f2" stroke-width="0.32">0,307</text>
<text x="1165.7" y="855.8" font-size="18" fill="#f2f2f2" stroke="#f2f2f2" stroke-width="0.32">0,310</text>
<text x="1250.0" y="855.8" font-size="18" fill="#f2f2f2" stroke="#f2f2f2" stroke-width="0.32">0,310</text>
<text x="1334.4" y="855.8" font-size="18" fill="#f2f2f2" stroke="#f2f2f2" stroke-width="0.32">0,309</text>
<text x="1418.8" y="855.8" font-size="18" fill="#f2f2f2" stroke="#f2f2f2" stroke-width="0.32">0,309</text>
<text x="1503.1" y="855.8" font-size="18" fill="#f2f2f2" stroke="#f2f2f2" stroke-width="0.32">0,308</text>
<text x="1587.4" y="855.8" font-size="18" fill="#f2f2f2" stroke="#f2f2f2" stroke-width="0.32">0,308</text>
<text x="1671.8" y="855.8" font-size="18" fill="#f2f2f2" stroke="#f2f2f2" stroke-width="0.32">0,308</text>
<text x="1756.2" y="855.8" font-size="18" fill="#f2f2f2" stroke="#f2f2f2" stroke-width="0.32">0,308</text>
<rect x="724.0" y="863.25" width="1111.0" height="29.75" fill="#7e7e7e" />
<text x="737.0" y="885.5" font-size="18" fill="#ececec" font-weight="bold">y: CIE31</text>
<text x="902.7" y="885.5" font-size="18" fill="#ececec" stroke="#ececec" stroke-width="0.32">0,288</text>
<text x="997.0" y="885.5" font-size="18" fill="#ececec" stroke="#ececec" stroke-width="0.32">0,311</text>
<text x="1081.3" y="885.5" font-size="18" fill="#ececec" stroke="#ececec" stroke-width="0.32">0,319</text>
<text x="1165.7" y="885.5" font-size="18" fill="#ececec" stroke="#ececec" stroke-width="0.32">0,322</text>
<text x="1250.0" y="885.5" font-size="18" fill="#ececec" stroke="#ececec" stroke-width="0.32">0,323</text>
<text x="1334.4" y="885.5" font-size="18" fill="#ececec" stroke="#ececec" stroke-width="0.32">0,323</text>
<text x="1418.8" y="885.5" font-size="18" fill="#ececec" stroke="#ececec" stroke-width="0.32">0,323</text>
<text x="1503.1" y="885.5" font-size="18" fill="#ececec" stroke="#ececec" stroke-width="0.32">0,324</text>
<text x="1587.4" y="885.5" font-size="18" fill="#ececec" stroke="#ececec" stroke-width="0.32">0,324</text>
<text x="1671.8" y="885.5" font-size="18" fill="#ececec" stroke="#ececec" stroke-width="0.32">0,324</text>
<text x="1756.2" y="885.5" font-size="18" fill="#ececec" stroke="#ececec" stroke-width="0.32">0,325</text>
<rect x="724.0" y="893.00" width="1111.0" height="29.75" fill="#424242" />
<rect x="724.0" y="893.00" width="1111.0" height="3" fill="#4a4a4a" />
<text x="737.0" y="915.3" font-size="18" fill="#f2f2f2" font-weight="bold">Y</text>
<text x="902.7" y="915.3" font-size="18" fill="#f2f2f2" stroke="#f2f2f2" stroke-width="0.32">0,240</text>
<text x="997.0" y="915.3" font-size="18" fill="#f2f2f2" stroke="#f2f2f2" stroke-width="0.32">4,647</text>
<text x="1081.3" y="915.3" font-size="18" fill="#f2f2f2" stroke="#f2f2f2" stroke-width="0.32">20,752</text>
<text x="1165.7" y="915.3" font-size="18" fill="#f2f2f2" stroke="#f2f2f2" stroke-width="0.32">50,649</text>
<text x="1250.0" y="915.3" font-size="18" fill="#f2f2f2" stroke="#f2f2f2" stroke-width="0.32">96,319</text>
<text x="1334.4" y="915.3" font-size="18" fill="#f2f2f2" stroke="#f2f2f2" stroke-width="0.32">159,125</text>
<text x="1418.8" y="915.3" font-size="18" fill="#f2f2f2" stroke="#f2f2f2" stroke-width="0.32">237,349</text>
<text x="1503.1" y="915.3" font-size="18" fill="#f2f2f2" stroke="#f2f2f2" stroke-width="0.32">332,035</text>
<text x="1587.4" y="915.3" font-size="18" fill="#f2f2f2" stroke="#f2f2f2" stroke-width="0.32">450,093</text>
<text x="1671.8" y="915.3" font-size="18" fill="#f2f2f2" stroke="#f2f2f2" stroke-width="0.32">586,880</text>
<text x="1756.2" y="915.3" font-size="18" fill="#f2f2f2" stroke="#f2f2f2" stroke-width="0.32">749,635</text>
<rect x="724.0" y="922.75" width="1111.0" height="29.75" fill="#7e7e7e" />
<text x="737.0" y="945.0" font-size="18" fill="#ececec" font-weight="bold">Target Y</text>
<text x="902.7" y="945.0" font-size="18" fill="#ececec" stroke="#ececec" stroke-width="0.32">0,000</text>
<text x="997.0" y="945.0" font-size="18" fill="#ececec" stroke="#ececec" stroke-width="0.32">7,744</text>
<text x="1081.3" y="945.0" font-size="18" fill="#ececec" stroke="#ececec" stroke-width="0.32">24,816</text>
<text x="1165.7" y="945.0" font-size="18" fill="#ececec" stroke="#ececec" stroke-width="0.32">54,178</text>
<text x="1250.0" y="945.0" font-size="18" fill="#ececec" stroke="#ececec" stroke-width="0.32">99,603</text>
<text x="1334.4" y="945.0" font-size="18" fill="#ececec" stroke="#ececec" stroke-width="0.32">161,817</text>
<text x="1418.8" y="945.0" font-size="18" fill="#ececec" stroke="#ececec" stroke-width="0.32">238,794</text>
<text x="1503.1" y="945.0" font-size="18" fill="#ececec" stroke="#ececec" stroke-width="0.32">333,738</text>
<text x="1587.4" y="945.0" font-size="18" fill="#ececec" stroke="#ececec" stroke-width="0.32">452,650</text>
<text x="1671.8" y="945.0" font-size="18" fill="#ececec" stroke="#ececec" stroke-width="0.32">593,185</text>
<text x="1756.2" y="945.0" font-size="18" fill="#ececec" stroke="#ececec" stroke-width="0.32">749,635</text>
<rect x="724.0" y="952.50" width="1111.0" height="29.75" fill="#424242" />
<rect x="724.0" y="952.50" width="1111.0" height="3" fill="#4a4a4a" />
<text x="737.0" y="974.8" font-size="18" fill="#f2f2f2" font-weight="bold">Gamma Log/Log</text>
<text x="902.7" y="974.8" font-size="18" fill="#f2f2f2" stroke="#f2f2f2" stroke-width="0.32">1,278</text>
<text x="997.0" y="974.8" font-size="18" fill="#f2f2f2" stroke="#f2f2f2" stroke-width="0.32">2,226</text>
<text x="1081.3" y="974.8" font-size="18" fill="#f2f2f2" stroke="#f2f2f2" stroke-width="0.32">2,229</text>
<text x="1165.7" y="974.8" font-size="18" fill="#f2f2f2" stroke="#f2f2f2" stroke-width="0.32">2,226</text>
<text x="1250.0" y="974.8" font-size="18" fill="#f2f2f2" stroke="#f2f2f2" stroke-width="0.32">2,239</text>
<text x="1334.4" y="974.8" font-size="18" fill="#f2f2f2" stroke="#f2f2f2" stroke-width="0.32">2,249</text>
<text x="1418.8" y="974.8" font-size="18" fill="#f2f2f2" stroke="#f2f2f2" stroke-width="0.32">2,251</text>
<text x="1503.1" y="974.8" font-size="18" fill="#f2f2f2" stroke="#f2f2f2" stroke-width="0.32">2,265</text>
<text x="1587.4" y="974.8" font-size="18" fill="#f2f2f2" stroke="#f2f2f2" stroke-width="0.32">2,286</text>
<text x="1671.8" y="974.8" font-size="18" fill="#f2f2f2" stroke="#f2f2f2" stroke-width="0.32">2,372</text>
<text x="1756.2" y="974.8" font-size="18" fill="#f2f2f2" stroke="#f2f2f2" stroke-width="0.32">2,275</text>
<rect x="724.0" y="982.25" width="1111.0" height="29.75" fill="#7e7e7e" />
<text x="737.0" y="1004.5" font-size="18" fill="#ececec" font-weight="bold">CCT</text>
<text x="902.7" y="1004.5" font-size="18" fill="#ececec" stroke="#ececec" stroke-width="0.32">6076,000</text>
<text x="997.0" y="1004.5" font-size="18" fill="#ececec" stroke="#ececec" stroke-width="0.32">7097,000</text>
<text x="1081.3" y="1004.5" font-size="18" fill="#ececec" stroke="#ececec" stroke-width="0.32">6908,000</text>
<text x="1165.7" y="1004.5" font-size="18" fill="#ececec" stroke="#ececec" stroke-width="0.32">6732,000</text>
<text x="1250.0" y="1004.5" font-size="18" fill="#ececec" stroke="#ececec" stroke-width="0.32">6700,000</text>
<text x="1334.4" y="1004.5" font-size="18" fill="#ececec" stroke="#ececec" stroke-width="0.32">6745,000</text>
<text x="1418.8" y="1004.5" font-size="18" fill="#ececec" stroke="#ececec" stroke-width="0.32">6772,000</text>
<text x="1503.1" y="1004.5" font-size="18" fill="#ececec" stroke="#ececec" stroke-width="0.32">6800,000</text>
<text x="1587.4" y="1004.5" font-size="18" fill="#ececec" stroke="#ececec" stroke-width="0.32">6812,000</text>
<text x="1671.8" y="1004.5" font-size="18" fill="#ececec" stroke="#ececec" stroke-width="0.32">6826,000</text>
<text x="1756.2" y="1004.5" font-size="18" fill="#ececec" stroke="#ececec" stroke-width="0.32">6797,000</text>
<rect x="724.0" y="1012.00" width="1111.0" height="29.75" fill="#424242" />
<rect x="724.0" y="1012.00" width="1111.0" height="3" fill="#4a4a4a" />
<text x="737.0" y="1034.3" font-size="18" fill="#f2f2f2" font-weight="bold">ΔE 2000</text>
<text x="902.7" y="1034.3" font-size="18" fill="#f2f2f2" stroke="#f2f2f2" stroke-width="0.32">0,395</text>
<text x="997.0" y="1034.3" font-size="18" fill="#f2f2f2" stroke="#f2f2f2" stroke-width="0.32">2,821</text>
<text x="1081.3" y="1034.3" font-size="18" fill="#f2f2f2" stroke="#f2f2f2" stroke-width="0.32">2,324</text>
<text x="1165.7" y="1034.3" font-size="18" fill="#f2f2f2" stroke="#f2f2f2" stroke-width="0.32">2,007</text>
<text x="1250.0" y="1034.3" font-size="18" fill="#f2f2f2" stroke="#f2f2f2" stroke-width="0.32">1,904</text>
<text x="1334.4" y="1034.3" font-size="18" fill="#f2f2f2" stroke="#f2f2f2" stroke-width="0.32">2,126</text>
<text x="1418.8" y="1034.3" font-size="18" fill="#f2f2f2" stroke="#f2f2f2" stroke-width="0.32">2,335</text>
<text x="1503.1" y="1034.3" font-size="18" fill="#f2f2f2" stroke="#f2f2f2" stroke-width="0.32">2,098</text>
<text x="1587.4" y="1034.3" font-size="18" fill="#f2f2f2" stroke="#f2f2f2" stroke-width="0.32">2,324</text>
<text x="1671.8" y="1034.3" font-size="18" fill="#f2f2f2" stroke="#f2f2f2" stroke-width="0.32">2,643</text>
<text x="1756.2" y="1034.3" font-size="18" fill="#f2f2f2" stroke="#f2f2f2" stroke-width="0.32">2,353</text>
<defs><linearGradient id="strip2" x1="0" y1="0" x2="0" y2="1"><stop offset="0" stop-color="#4a4a4a"/><stop offset="1" stop-color="#202020"/></linearGradient></defs>
<rect x="1" y="1112.8" width="1917" height="51" fill="url(#strip2)" />
<rect x="1" y="1163.8" width="1918" height="1.2" fill="#1a1a1a" />
<rect x="0" y="1165" width="1920" height="1" fill="#8a8a8a" />
<rect x="1.8" y="1113.2" width="125.2" height="50.6" rx="3" fill="url(#sbtn)" stroke="#3a3a3a" stroke-width="0.8"/>
<rect x="6.2" y="1117.6" width="116.9" height="29.4" rx="3" fill="#000000" stroke="#3a3a3a" stroke-width="1"/>
<text x="64.2" y="1160.0" font-size="9.5" fill="#353535" text-anchor="middle" font-weight="bold">0</text>
<rect x="129.1" y="1113.2" width="125.2" height="50.6" rx="3" fill="url(#sbtn)" stroke="#3a3a3a" stroke-width="0.8"/>
<rect x="133.5" y="1117.6" width="116.9" height="29.4" rx="3" fill="#1a1a1a" stroke="#3a3a3a" stroke-width="1"/>
<text x="191.6" y="1160.0" font-size="9.5" fill="#353535" text-anchor="middle" font-weight="bold">10</text>
<rect x="256.4" y="1113.2" width="125.2" height="50.6" rx="3" fill="url(#sbtn)" stroke="#3a3a3a" stroke-width="0.8"/>
<rect x="260.8" y="1117.6" width="116.9" height="29.4" rx="3" fill="#333333" stroke="#3a3a3a" stroke-width="1"/>
<text x="318.9" y="1160.0" font-size="9.5" fill="#353535" text-anchor="middle" font-weight="bold">20</text>
<rect x="383.6" y="1113.2" width="125.2" height="50.6" rx="3" fill="url(#sbtn)" stroke="#3a3a3a" stroke-width="0.8"/>
<rect x="388.0" y="1117.6" width="116.9" height="29.4" rx="3" fill="#4d4d4d" stroke="#3a3a3a" stroke-width="1"/>
<text x="446.1" y="1160.0" font-size="9.5" fill="#353535" text-anchor="middle" font-weight="bold">30</text>
<rect x="510.9" y="1113.2" width="125.2" height="50.6" rx="3" fill="url(#sbtn)" stroke="#3a3a3a" stroke-width="0.8"/>
<rect x="515.4" y="1117.6" width="116.9" height="29.4" rx="3" fill="#666666" stroke="#3a3a3a" stroke-width="1"/>
<text x="573.5" y="1160.0" font-size="9.5" fill="#353535" text-anchor="middle" font-weight="bold">40</text>
<rect x="638.2" y="1113.2" width="125.2" height="50.6" rx="3" fill="url(#sbtn)" stroke="#3a3a3a" stroke-width="0.8"/>
<rect x="642.6" y="1117.6" width="116.9" height="29.4" rx="3" fill="#808080" stroke="#3a3a3a" stroke-width="1"/>
<text x="700.8" y="1160.0" font-size="9.5" fill="#353535" text-anchor="middle" font-weight="bold">50</text>
<rect x="765.5" y="1113.2" width="125.2" height="50.6" rx="3" fill="url(#sbtn)" stroke="#3a3a3a" stroke-width="0.8"/>
<rect x="769.9" y="1117.6" width="116.9" height="29.4" rx="3" fill="#999999" stroke="#3a3a3a" stroke-width="1"/>
<text x="828.0" y="1160.0" font-size="9.5" fill="#353535" text-anchor="middle" font-weight="bold">60</text>
<rect x="892.9" y="1113.2" width="125.2" height="50.6" rx="3" fill="url(#sbtn)" stroke="#3a3a3a" stroke-width="0.8"/>
<rect x="897.2" y="1117.6" width="116.9" height="29.4" rx="3" fill="#b3b3b3" stroke="#3a3a3a" stroke-width="1"/>
<text x="955.4" y="1160.0" font-size="9.5" fill="#353535" text-anchor="middle" font-weight="bold">70</text>
<rect x="1020.1" y="1113.2" width="125.2" height="50.6" rx="3" fill="url(#sbtn)" stroke="#3a3a3a" stroke-width="0.8"/>
<rect x="1024.5" y="1117.6" width="116.9" height="29.4" rx="3" fill="#cccccc" stroke="#3a3a3a" stroke-width="1"/>
<text x="1082.7" y="1160.0" font-size="9.5" fill="#353535" text-anchor="middle" font-weight="bold">80</text>
<rect x="1147.5" y="1113.2" width="125.2" height="50.6" rx="3" fill="url(#sbtn)" stroke="#3a3a3a" stroke-width="0.8"/>
<rect x="1151.9" y="1117.6" width="116.9" height="29.4" rx="3" fill="#e6e6e6" stroke="#3a3a3a" stroke-width="1"/>
<text x="1210.0" y="1160.0" font-size="9.5" fill="#353535" text-anchor="middle" font-weight="bold">90</text>
<rect x="1275.2" y="1113.5" width="124.5" height="50" rx="3" fill="#333333" stroke="#181818" stroke-width="1"/>
<rect x="1275.2" y="1113.5" width="124.5" height="35" rx="3" fill="#161616"/>
<rect x="1279.8" y="1117.4" width="116.5" height="30" rx="3" fill="#ffffff"/>
<text x="1337.2" y="1160.0" font-size="9.5" fill="#f4f4f4" text-anchor="middle" font-weight="bold">100</text>
<rect x="1879" y="1112.6" width="33" height="25.2" fill="#2a2a2a"/>
<circle cx="1898.9" cy="1125.7" r="8" fill="#333"/>
<rect x="1648.8" y="1112.6" width="40.1" height="51" rx="3" fill="url(#ctlbtn)"/>
<line x1="1648.8" y1="1128" x2="1688.9" y2="1128" stroke="#666" stroke-width="1" />
<circle cx="1668.8" cy="1119.8" r="6.5" fill="url(#ctlcirc)"/>
<path d="M1665.3,1121.5 L1668.8,1117.5 L1672.3,1121.5 Z" fill="#2a2a2a"/>
<rect x="1657.5" y="1135.2" width="22" height="22" rx="3" fill="#c0c0c0" stroke="#1e1e1e" stroke-width="3"/>
<rect x="1663" y="1141" width="11" height="11" fill="#000" />
<rect x="1690" y="1112.6" width="37.4" height="25.2" fill="url(#ctlbtn)"/>
<circle cx="1709.1" cy="1125.7" r="8" fill="url(#ctlcirc)"/>
<rect x="1728.2" y="1112.6" width="37.6" height="25.2" fill="url(#ctlbtn)"/>
<circle cx="1747.4" cy="1125.7" r="8" fill="url(#ctlcirc)"/>
<rect x="1766.6" y="1112.6" width="36.6" height="25.2" fill="url(#ctlbtn)"/>
<circle cx="1785.3" cy="1125.7" r="8" fill="url(#ctlcirc)"/>
<rect x="1804" y="1112.6" width="36.5" height="25.2" fill="url(#ctlbtn)"/>
<circle cx="1822.7" cy="1125.7" r="8" fill="url(#ctlcirc)"/>
<rect x="1841.3" y="1112.6" width="37.1" height="25.2" fill="url(#ctlbtn)"/>
<circle cx="1860.2" cy="1125.7" r="8" fill="url(#ctlcirc)"/>
<rect x="1704.5" y="1122" width="8" height="8" fill="#2a2a2a" />
<path d="M1743.7,1121.5 L1751.7,1126 L1743.7,1130.5 Z" fill="#2a2a2a"/>
<path d="M1780.8000000000002,1122 h-1.6 v8.3 h1.6 M1788.0,1122 h1.6 v8.3 h-1.6" fill="none" stroke="#222" stroke-width="1.7"/>
<rect x="1782.4" y="1125.3" width="1.5" height="1.5" fill="#222" />
<rect x="1784.6" y="1125.5" width="2" height="1.2" fill="#222" />
<g transform="translate(1823,1125.6)" fill="none" stroke="#222" stroke-width="1.6"><ellipse cx="-2.9" cy="0" rx="2.9" ry="2.3"/><ellipse cx="2.9" cy="0" rx="2.9" ry="2.3"/></g>
<g transform="translate(1860.2,1126)" fill="none" stroke="#222" stroke-width="1.9"><path d="M-4,0.5 A4,4 0 0 1 2.5,-3.2"/><path d="M4,-0.5 A4,4 0 0 1 -2.5,3.2"/></g>
<path d="M1861.4,1121 L1865.4,1121.8 L1863.2,1125 Z M1859.0,1131 L1855.0,1130.2 L1857.2,1127 Z" fill="#222"/>
<rect x="1690" y="1139.3" width="112.5" height="24.3" fill="url(#ctlbtn)"/>
<rect x="1804" y="1139.3" width="113.8" height="24.3" fill="url(#ctlbtn)"/>
<circle cx="1715.8" cy="1151.5" r="8" fill="url(#ctlcirc)"/>
<circle cx="1893.8" cy="1151.5" r="8" fill="url(#ctlcirc)"/>
<text x="1715.8" y="1156.0" font-size="13" fill="#2a2a2a" text-anchor="middle" font-weight="bold">«</text>
<text x="1893.8" y="1156.0" font-size="13" fill="#2a2a2a" text-anchor="middle" font-weight="bold">»</text>
<text x="1737.5" y="1157.8" font-size="18" fill="#222222" stroke="#222222" stroke-width="0.75" textLength="43.0" lengthAdjust="spacingAndGlyphs">Back</text>
<text x="1827.0" y="1157.8" font-size="18" fill="#222222" stroke="#222222" stroke-width="0.75" textLength="43.5" lengthAdjust="spacingAndGlyphs">Next</text>
</svg>
</body></html>
